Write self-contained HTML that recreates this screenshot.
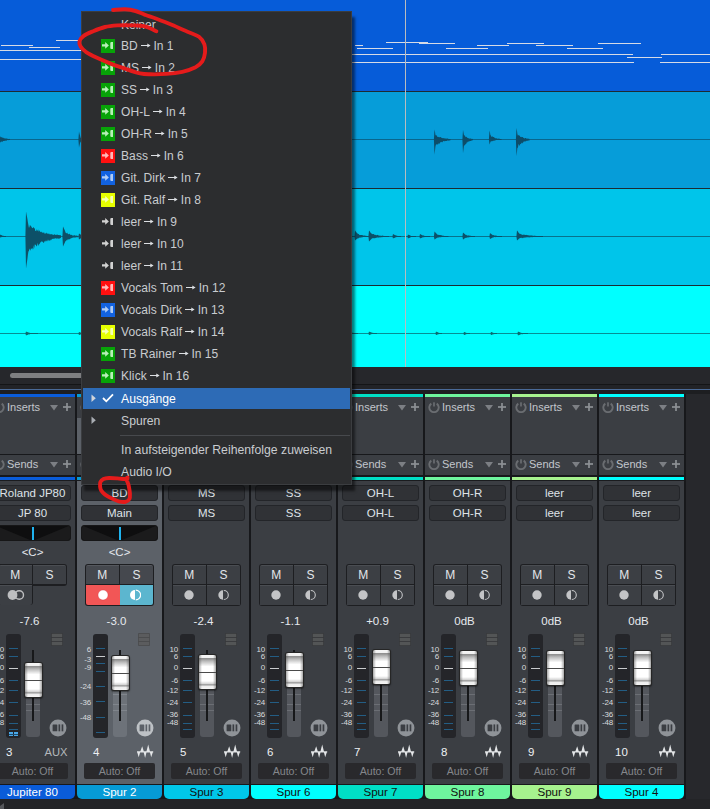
<!DOCTYPE html><html><head><meta charset="utf-8"><style>
*{margin:0;padding:0;box-sizing:border-box}
html,body{width:710px;height:809px;overflow:hidden;background:#232427;font-family:"Liberation Sans", sans-serif;position:relative}
div,svg{position:absolute}
.t{white-space:nowrap;line-height:1}
</style></head><body>
<div style="left:0px;top:0px;width:710px;height:91px;background:#065cd9"></div>
<div style="left:0px;top:92px;width:710px;height:96px;background:#069dd9"></div>
<div style="left:0px;top:189px;width:710px;height:96px;background:#00c5ea"></div>
<div style="left:0px;top:286px;width:710px;height:81px;background:#00ffff"></div>
<div style="left:0px;top:91px;width:710px;height:1px;background:#1d2b33"></div>
<div style="left:0px;top:188px;width:710px;height:1px;background:#1d2b33"></div>
<div style="left:0px;top:285px;width:710px;height:1px;background:#1d2b33"></div>
<div style="left:56px;top:40px;width:104px;height:1px;background:#d6dbe6"></div>
<div style="left:1px;top:45px;width:32px;height:1px;background:#d6dbe6"></div>
<div style="left:29px;top:47px;width:31px;height:1px;background:#d6dbe6"></div>
<div style="left:0px;top:50px;width:82px;height:1px;background:#d6dbe6"></div>
<div style="left:0px;top:59px;width:82px;height:1px;background:#d6dbe6"></div>
<div style="left:386px;top:42px;width:42px;height:1px;background:#d6dbe6"></div>
<div style="left:419px;top:43px;width:36px;height:1px;background:#d6dbe6"></div>
<div style="left:355px;top:45px;width:8px;height:1px;background:#d6dbe6"></div>
<div style="left:477px;top:45px;width:32px;height:1px;background:#d6dbe6"></div>
<div style="left:357px;top:48px;width:36px;height:1px;background:#d6dbe6"></div>
<div style="left:446px;top:48px;width:42px;height:1px;background:#d6dbe6"></div>
<div style="left:507px;top:43px;width:37px;height:1px;background:#d6dbe6"></div>
<div style="left:598px;top:43px;width:43px;height:1px;background:#d6dbe6"></div>
<div style="left:536px;top:45px;width:37px;height:1px;background:#d6dbe6"></div>
<div style="left:567px;top:48px;width:36px;height:1px;background:#d6dbe6"></div>
<div style="left:352px;top:54px;width:281px;height:1px;background:#d6dbe6"></div>
<div style="left:661px;top:54px;width:49px;height:1px;background:#d6dbe6"></div>
<div style="left:627px;top:57px;width:35px;height:1px;background:#d6dbe6"></div>
<div style="left:352px;top:62px;width:282px;height:1px;background:#d6dbe6"></div>
<div style="left:660px;top:62px;width:50px;height:1px;background:#d6dbe6"></div>
<svg style="left:0;top:0" width="710" height="367" viewBox="0 0 710 367"><rect x="0" y="139" width="710" height="1" fill="#0c4f6c" fill-opacity="0.7"/><rect x="0" y="236" width="710" height="1" fill="#0c4f64" fill-opacity="0.7"/><rect x="0" y="333" width="710" height="1" fill="#0a6a70" fill-opacity="0.75"/><path d="M433.9,139.5 L434.5,129.5 L435.0,132.1 L435.4,134.7 L435.9,135.6 L436.4,135.3 L436.9,135.8 L437.3,136.8 L437.8,137.0 L438.3,137.2 L438.7,136.8 L439.2,137.4 L439.7,136.9 L440.1,137.2 L440.6,136.9 L441.1,137.2 L441.6,138.0 L442.0,138.0 L442.5,138.2 L443.0,137.9 L443.4,138.1 L443.9,138.5 L444.4,138.2 L444.9,138.5 L445.3,138.5 L445.8,138.4 L446.3,138.7 L446.7,138.6 L447.2,138.6 L447.7,138.6 L448.1,138.8 L448.6,139.0 L449.1,139.0 L449.6,138.9 L450.0,138.9 L450.5,139.0 L450.5,140.3 L450.0,140.2 L449.6,140.4 L449.1,140.5 L448.6,140.5 L448.1,140.7 L447.7,140.4 L447.2,140.6 L446.7,141.0 L446.3,140.9 L445.8,141.1 L445.3,140.9 L444.9,141.3 L444.4,141.2 L443.9,141.1 L443.4,141.1 L443.0,141.6 L442.5,142.0 L442.0,142.5 L441.6,141.7 L441.1,142.1 L440.6,141.9 L440.1,142.7 L439.7,143.9 L439.2,142.9 L438.7,144.4 L438.3,143.1 L437.8,144.1 L437.3,144.7 L436.9,144.6 L436.4,144.2 L435.9,144.7 L435.4,146.7 L435.0,150.6 L434.5,154.5 Z" fill="#0d4d69"/><path d="M462.4,139.5 L463.0,130.0 L463.5,132.4 L463.9,134.8 L464.4,135.4 L464.8,135.4 L465.3,136.4 L465.7,137.3 L466.2,136.8 L466.6,136.9 L467.1,137.6 L467.5,138.1 L468.0,138.1 L468.5,138.3 L468.9,138.4 L469.4,138.4 L469.8,138.7 L470.3,138.5 L470.7,138.5 L471.2,138.8 L471.6,138.9 L472.1,138.7 L472.5,139.0 L473.0,139.0 L473.0,140.2 L472.5,140.2 L472.1,140.2 L471.6,140.7 L471.2,140.6 L470.7,140.9 L470.3,141.1 L469.8,141.0 L469.4,141.5 L468.9,141.1 L468.5,141.9 L468.0,141.4 L467.5,142.1 L467.1,142.7 L466.6,142.4 L466.2,144.0 L465.7,143.9 L465.3,144.4 L464.8,145.6 L464.4,144.9 L463.9,146.2 L463.5,149.6 L463.0,153.0 Z" fill="#0d4d69"/><path d="M488.9,139.5 L489.5,130.5 L490.0,132.8 L490.4,135.1 L490.9,135.6 L491.3,136.9 L491.8,136.6 L492.3,136.0 L492.7,136.9 L493.2,136.9 L493.7,136.9 L494.1,137.2 L494.6,137.8 L495.0,138.2 L495.5,138.3 L496.0,138.3 L496.4,138.3 L496.9,138.6 L497.3,138.7 L497.8,138.8 L498.3,138.6 L498.7,138.8 L499.2,138.8 L499.7,138.7 L500.1,138.9 L500.6,139.0 L501.0,139.0 L501.5,139.0 L501.5,140.0 L501.0,140.0 L500.6,140.0 L500.1,140.0 L499.7,140.0 L499.2,140.0 L498.7,140.0 L498.3,140.0 L497.8,140.1 L497.3,140.0 L496.9,140.0 L496.4,140.0 L496.0,140.1 L495.5,140.2 L495.0,140.5 L494.6,140.5 L494.1,140.8 L493.7,140.9 L493.2,140.5 L492.7,141.0 L492.3,141.2 L491.8,141.3 L491.3,141.3 L490.9,141.3 L490.4,142.0 L490.0,143.2 L489.5,144.5 Z" fill="#0d4d69"/><path d="M515.9,139.5 L516.5,128.0 L517.0,130.9 L517.4,133.9 L517.9,135.8 L518.4,135.0 L518.8,135.3 L519.3,135.7 L519.8,135.5 L520.2,136.7 L520.7,137.1 L521.1,136.8 L521.6,137.3 L522.1,136.9 L522.5,137.1 L523.0,137.3 L523.5,138.0 L523.9,138.0 L524.4,138.4 L524.9,138.3 L525.3,138.0 L525.8,138.1 L526.2,138.2 L526.7,138.7 L527.2,138.8 L527.6,138.6 L528.1,138.6 L528.6,138.8 L529.0,139.0 L529.5,138.8 L529.5,140.4 L529.0,140.5 L528.6,140.6 L528.1,140.6 L527.6,140.9 L527.2,140.6 L526.7,140.7 L526.2,140.9 L525.8,141.5 L525.3,141.2 L524.9,141.6 L524.4,141.4 L523.9,141.2 L523.5,142.0 L523.0,142.5 L522.5,142.9 L522.1,143.5 L521.6,142.5 L521.1,143.8 L520.7,144.2 L520.2,143.7 L519.8,144.9 L519.3,146.1 L518.8,144.0 L518.4,144.7 L517.9,148.0 L517.4,147.6 L517.0,151.8 L516.5,156.0 Z" fill="#0d4d69"/><path d="M78.4,139.5 L79.0,131.5 L79.4,133.2 L79.8,134.8 L80.1,135.8 L80.5,137.5 L80.9,137.9 L81.2,137.9 L81.6,138.6 L82.0,138.7 L82.0,140.1 L81.6,140.7 L81.2,140.8 L80.9,141.6 L80.5,142.3 L80.1,142.7 L79.8,144.2 L79.4,145.8 L79.0,147.5 Z" fill="#0d4d69"/><path d="M-4.6,139.5 L-4.0,131.5 L-3.5,132.3 L-3.1,133.1 L-2.6,134.0 L-2.1,134.8 L-1.7,135.6 L-1.2,136.7 L-0.7,135.7 L-0.3,137.1 L0.2,136.2 L0.7,137.2 L1.1,137.6 L1.6,136.9 L2.1,137.5 L2.5,137.7 L3.0,137.6 L3.5,138.1 L3.9,138.3 L4.4,138.3 L4.9,138.5 L5.3,138.5 L5.8,138.4 L6.3,138.6 L6.7,138.6 L7.2,138.7 L7.7,138.8 L8.1,139.0 L8.6,139.0 L9.1,138.8 L9.5,139.0 L10.0,139.0 L10.0,140.1 L9.5,140.1 L9.1,140.1 L8.6,140.1 L8.1,140.3 L7.7,140.1 L7.2,140.1 L6.7,140.4 L6.3,140.7 L5.8,140.8 L5.3,140.6 L4.9,141.0 L4.4,140.8 L3.9,141.0 L3.5,140.9 L3.0,140.9 L2.5,141.7 L2.1,141.9 L1.6,141.8 L1.1,141.2 L0.7,142.1 L0.2,142.4 L-0.3,142.9 L-0.7,143.1 L-1.2,142.3 L-1.7,143.4 L-2.1,144.2 L-2.6,145.0 L-3.1,145.9 L-3.5,146.7 L-4.0,147.5 Z" fill="#0d4d69"/><path d="M25.4,236.5 L26.0,211.5 L26.5,214.2 L27.0,216.8 L27.5,219.5 L27.9,222.2 L28.4,224.9 L28.9,227.7 L29.4,227.3 L29.9,224.9 L30.4,226.3 L30.9,224.9 L31.3,226.7 L31.8,227.5 L32.3,228.0 L32.8,228.2 L33.3,227.6 L33.8,226.9 L34.3,228.7 L34.8,227.9 L35.2,230.7 L35.7,231.1 L36.2,231.3 L36.7,229.1 L37.2,231.3 L37.7,230.0 L38.2,229.5 L38.6,231.6 L39.1,231.3 L39.6,229.9 L40.1,232.3 L40.6,231.5 L41.1,232.4 L41.6,231.4 L42.0,231.9 L42.5,233.2 L43.0,232.0 L43.5,233.3 L44.0,232.0 L44.5,233.5 L45.0,233.7 L45.4,233.4 L45.9,233.2 L46.4,232.6 L46.9,233.8 L47.4,233.3 L47.9,234.1 L48.4,233.3 L48.8,234.3 L49.3,233.6 L49.8,234.4 L50.3,234.5 L50.8,234.1 L51.3,234.0 L51.8,234.5 L52.2,234.2 L52.7,234.8 L53.2,234.9 L53.7,234.7 L54.2,234.3 L54.7,234.6 L55.2,234.8 L55.7,234.9 L56.1,234.6 L56.6,235.1 L57.1,234.5 L57.6,234.7 L58.1,235.0 L58.6,235.1 L59.1,235.0 L59.5,235.2 L60.0,235.0 L60.5,235.3 L61.0,235.5 L61.0,237.8 L60.5,238.0 L60.0,238.3 L59.5,238.5 L59.1,238.7 L58.6,238.4 L58.1,238.7 L57.6,238.4 L57.1,238.2 L56.6,238.6 L56.1,238.8 L55.7,238.2 L55.2,238.3 L54.7,238.5 L54.2,238.7 L53.7,238.8 L53.2,238.8 L52.7,238.8 L52.2,239.0 L51.8,238.9 L51.3,240.2 L50.8,239.4 L50.3,240.4 L49.8,240.5 L49.3,240.5 L48.8,240.9 L48.4,240.1 L47.9,239.5 L47.4,240.9 L46.9,241.5 L46.4,240.2 L45.9,241.8 L45.4,240.2 L45.0,241.9 L44.5,240.8 L44.0,242.7 L43.5,242.9 L43.0,241.9 L42.5,241.6 L42.0,242.1 L41.6,241.0 L41.1,242.1 L40.6,242.3 L40.1,242.8 L39.6,244.4 L39.1,243.4 L38.6,245.4 L38.2,245.7 L37.7,242.8 L37.2,245.3 L36.7,246.4 L36.2,245.7 L35.7,244.2 L35.2,245.3 L34.8,244.2 L34.3,248.4 L33.8,245.3 L33.3,248.9 L32.8,249.6 L32.3,247.8 L31.8,249.1 L31.3,248.4 L30.9,248.4 L30.4,250.8 L29.9,249.7 L29.4,248.5 L28.9,250.9 L28.4,251.4 L27.9,254.8 L27.5,258.2 L27.0,261.7 L26.5,265.1 L26.0,268.5 Z" fill="#0d5068"/><path d="M62.4,236.5 L63.0,226.5 L63.5,227.5 L63.9,228.6 L64.4,229.6 L64.9,230.6 L65.3,231.7 L65.8,233.1 L66.3,233.0 L66.8,233.6 L67.2,232.4 L67.7,233.7 L68.2,233.9 L68.6,234.2 L69.1,234.3 L69.6,233.6 L70.0,234.6 L70.5,234.7 L71.0,235.1 L71.4,234.8 L71.9,235.1 L72.4,235.4 L72.8,235.4 L73.3,235.5 L73.8,235.4 L74.2,235.3 L74.7,235.3 L75.2,235.4 L75.7,235.7 L76.1,235.5 L76.6,235.6 L77.1,235.9 L77.5,235.7 L78.0,235.8 L78.0,237.2 L77.5,237.2 L77.1,237.3 L76.6,237.3 L76.1,237.2 L75.7,237.3 L75.2,237.7 L74.7,237.6 L74.2,237.6 L73.8,237.5 L73.3,237.5 L72.8,237.8 L72.4,237.8 L71.9,238.1 L71.4,238.3 L71.0,238.3 L70.5,238.4 L70.0,239.2 L69.6,238.9 L69.1,239.6 L68.6,239.2 L68.2,239.4 L67.7,239.3 L67.2,240.2 L66.8,240.8 L66.3,239.8 L65.8,241.3 L65.3,241.3 L64.9,242.4 L64.4,243.4 L63.9,244.4 L63.5,245.5 L63.0,246.5 Z" fill="#0d5068"/><path d="M78.4,236.5 L79.0,233.5 L79.4,233.7 L79.8,234.0 L80.1,234.2 L80.5,234.5 L80.9,234.7 L81.2,235.0 L81.6,235.5 L82.0,235.6 L82.0,237.6 L81.6,237.7 L81.2,238.0 L80.9,238.3 L80.5,238.5 L80.1,238.8 L79.8,239.0 L79.4,239.3 L79.0,239.5 Z" fill="#0d5068"/><path d="M354.4,236.5 L355.0,230.5 L355.5,231.1 L355.9,231.7 L356.4,232.3 L356.9,233.0 L357.3,233.6 L357.8,233.5 L358.3,234.0 L358.7,234.1 L359.2,234.8 L359.7,235.0 L360.1,235.1 L360.6,234.9 L361.1,234.9 L361.5,235.1 L362.0,235.1 L362.5,235.3 L362.9,235.3 L363.4,235.4 L363.9,235.8 L364.3,235.6 L364.8,235.6 L365.3,235.8 L365.7,235.8 L366.2,235.8 L366.7,235.9 L367.1,236.0 L367.6,236.0 L368.1,236.0 L368.5,236.0 L369.0,236.0 L369.0,237.0 L368.5,237.0 L368.1,237.0 L367.6,237.0 L367.1,237.0 L366.7,237.0 L366.2,237.0 L365.7,237.0 L365.3,237.0 L364.8,237.1 L364.3,237.0 L363.9,237.0 L363.4,237.1 L362.9,237.1 L362.5,237.3 L362.0,237.4 L361.5,237.2 L361.1,237.6 L360.6,237.6 L360.1,237.8 L359.7,237.7 L359.2,237.5 L358.7,238.1 L358.3,238.4 L357.8,238.5 L357.3,238.4 L356.9,238.9 L356.4,239.3 L355.9,239.7 L355.5,240.1 L355.0,240.5 Z" fill="#0d5068"/><path d="M368.4,236.5 L369.0,230.5 L369.5,231.1 L370.0,231.8 L370.4,232.4 L370.9,233.0 L371.4,233.6 L371.9,233.7 L372.3,234.0 L372.8,234.2 L373.3,233.9 L373.8,233.9 L374.2,235.0 L374.7,234.4 L375.2,234.8 L375.7,235.1 L376.1,235.2 L376.6,235.3 L377.1,234.8 L377.6,235.0 L378.0,235.0 L378.5,235.5 L379.0,235.4 L379.5,235.7 L380.0,235.5 L380.4,235.7 L380.9,235.7 L381.4,235.9 L381.9,235.6 L382.3,235.6 L382.8,235.7 L383.3,235.9 L383.8,235.7 L384.2,235.9 L384.7,236.0 L385.2,236.0 L385.7,236.0 L386.1,236.0 L386.6,236.0 L387.1,236.0 L387.6,236.0 L388.0,236.0 L388.5,236.0 L389.0,236.0 L389.0,237.0 L388.5,237.0 L388.0,237.0 L387.6,237.0 L387.1,237.0 L386.6,237.0 L386.1,237.0 L385.7,237.0 L385.2,237.0 L384.7,237.0 L384.2,237.0 L383.8,237.0 L383.3,237.0 L382.8,237.0 L382.3,237.2 L381.9,237.0 L381.4,237.3 L380.9,237.4 L380.4,237.2 L380.0,237.2 L379.5,237.4 L379.0,237.2 L378.5,237.7 L378.0,237.6 L377.6,237.6 L377.1,237.4 L376.6,237.7 L376.1,237.8 L375.7,238.2 L375.2,237.8 L374.7,238.4 L374.2,238.1 L373.8,238.6 L373.3,238.0 L372.8,238.1 L372.3,238.5 L371.9,238.4 L371.4,238.9 L370.9,239.4 L370.4,239.9 L370.0,240.5 L369.5,241.0 L369.0,241.5 Z" fill="#0d5068"/><path d="M392.4,236.5 L393.0,234.0 L393.4,234.2 L393.9,234.5 L394.3,234.7 L394.8,235.0 L395.2,235.2 L395.7,235.3 L396.1,235.4 L396.6,235.8 L397.0,235.6 L397.4,235.9 L397.9,236.0 L398.3,235.9 L398.8,236.0 L399.2,236.0 L399.7,236.0 L400.1,236.0 L400.6,236.0 L401.0,236.0 L401.0,237.0 L400.6,237.0 L400.1,237.0 L399.7,237.0 L399.2,237.0 L398.8,237.0 L398.3,237.0 L397.9,237.0 L397.4,237.0 L397.0,237.0 L396.6,237.0 L396.1,237.3 L395.7,237.3 L395.2,237.5 L394.8,237.7 L394.3,237.9 L393.9,238.1 L393.4,238.3 L393.0,238.5 Z" fill="#0d5068"/><path d="M407.4,236.5 L408.0,234.5 L408.4,234.7 L408.9,234.9 L409.3,235.1 L409.8,235.3 L410.2,235.5 L410.7,235.7 L411.1,235.9 L411.6,235.9 L412.0,236.0 L412.4,236.0 L412.9,236.0 L413.3,236.0 L413.8,236.0 L414.2,236.0 L414.7,236.0 L415.1,236.0 L415.6,236.0 L416.0,236.0 L416.0,237.0 L415.6,237.0 L415.1,237.0 L414.7,237.0 L414.2,237.0 L413.8,237.0 L413.3,237.0 L412.9,237.0 L412.4,237.1 L412.0,237.0 L411.6,237.0 L411.1,237.1 L410.7,237.2 L410.2,237.5 L409.8,237.7 L409.3,237.9 L408.9,238.1 L408.4,238.3 L408.0,238.5 Z" fill="#0d5068"/><path d="M419.4,236.5 L420.0,234.0 L420.5,234.2 L420.9,234.5 L421.4,234.8 L421.8,235.0 L422.3,235.2 L422.7,235.5 L423.2,235.3 L423.6,235.5 L424.1,235.9 L424.5,235.7 L425.0,235.9 L425.5,236.0 L425.9,235.9 L426.4,235.9 L426.8,236.0 L427.3,236.0 L427.7,236.0 L428.2,236.0 L428.6,236.0 L429.1,236.0 L429.5,236.0 L430.0,236.0 L430.0,237.0 L429.5,237.0 L429.1,237.0 L428.6,237.0 L428.2,237.0 L427.7,237.0 L427.3,237.0 L426.8,237.0 L426.4,237.0 L425.9,237.0 L425.5,237.0 L425.0,237.0 L424.5,237.0 L424.1,237.2 L423.6,237.0 L423.2,237.4 L422.7,237.3 L422.3,237.5 L421.8,237.7 L421.4,237.9 L420.9,238.1 L420.5,238.3 L420.0,238.5 Z" fill="#0d5068"/><path d="M433.9,236.5 L434.5,231.5 L435.0,232.0 L435.4,232.5 L435.9,233.0 L436.4,233.6 L436.8,234.1 L437.3,234.8 L437.8,234.4 L438.2,235.0 L438.7,234.8 L439.2,235.0 L439.6,235.0 L440.1,235.3 L440.6,235.0 L441.0,235.1 L441.5,235.6 L442.0,235.3 L442.4,235.7 L442.9,235.7 L443.4,235.8 L443.8,235.7 L444.3,235.9 L444.8,235.9 L445.2,235.9 L445.7,235.9 L446.2,236.0 L446.6,236.0 L447.1,236.0 L447.6,236.0 L448.0,236.0 L448.5,236.0 L448.5,237.0 L448.0,237.0 L447.6,237.0 L447.1,237.0 L446.6,237.0 L446.2,237.0 L445.7,237.0 L445.2,237.0 L444.8,237.0 L444.3,237.0 L443.8,237.0 L443.4,237.0 L442.9,237.0 L442.4,237.0 L442.0,237.1 L441.5,237.0 L441.0,237.2 L440.6,237.3 L440.1,237.3 L439.6,237.2 L439.2,237.3 L438.7,237.6 L438.2,237.4 L437.8,237.8 L437.3,237.6 L436.8,238.0 L436.4,238.3 L435.9,238.6 L435.4,238.9 L435.0,239.2 L434.5,239.5 Z" fill="#0d5068"/><path d="M462.4,236.5 L463.0,232.5 L463.5,232.9 L463.9,233.3 L464.4,233.7 L464.8,234.1 L465.3,234.5 L465.8,235.0 L466.2,234.8 L466.7,235.3 L467.2,235.4 L467.6,235.5 L468.1,235.7 L468.5,235.3 L469.0,235.5 L469.5,235.5 L469.9,235.9 L470.4,235.7 L470.8,235.8 L471.3,236.0 L471.8,236.0 L472.2,236.0 L472.7,236.0 L473.2,236.0 L473.6,236.0 L474.1,236.0 L474.5,236.0 L475.0,236.0 L475.0,237.0 L474.5,237.0 L474.1,237.0 L473.6,237.0 L473.2,237.0 L472.7,237.0 L472.2,237.0 L471.8,237.0 L471.3,237.0 L470.8,237.0 L470.4,237.0 L469.9,237.2 L469.5,237.1 L469.0,237.3 L468.5,237.4 L468.1,237.3 L467.6,237.2 L467.2,237.7 L466.7,237.5 L466.2,237.9 L465.8,237.7 L465.3,238.0 L464.8,238.3 L464.4,238.6 L463.9,238.9 L463.5,239.2 L463.0,239.5 Z" fill="#0d5068"/><path d="M489.4,236.5 L490.0,233.0 L490.5,233.4 L490.9,233.7 L491.4,234.1 L491.8,234.4 L492.3,234.8 L492.8,235.2 L493.2,234.9 L493.7,235.3 L494.2,235.2 L494.6,235.7 L495.1,235.4 L495.5,235.5 L496.0,235.8 L496.5,235.6 L496.9,235.9 L497.4,236.0 L497.8,236.0 L498.3,235.9 L498.8,235.9 L499.2,236.0 L499.7,236.0 L500.2,236.0 L500.6,236.0 L501.1,236.0 L501.5,236.0 L502.0,236.0 L502.0,237.0 L501.5,237.0 L501.1,237.0 L500.6,237.0 L500.2,237.0 L499.7,237.0 L499.2,237.0 L498.8,237.0 L498.3,237.0 L497.8,237.0 L497.4,237.0 L496.9,237.0 L496.5,237.0 L496.0,237.0 L495.5,237.2 L495.1,237.1 L494.6,237.1 L494.2,237.1 L493.7,237.5 L493.2,237.2 L492.8,237.5 L492.3,237.7 L491.8,238.0 L491.4,238.2 L490.9,238.5 L490.5,238.7 L490.0,239.0 Z" fill="#0d5068"/><path d="M516.4,236.5 L517.0,230.5 L517.5,231.1 L518.0,231.8 L518.4,232.4 L518.9,233.0 L519.4,233.7 L519.9,233.8 L520.4,234.2 L520.9,233.8 L521.3,234.6 L521.8,234.6 L522.3,234.9 L522.8,234.7 L523.3,234.2 L523.7,234.9 L524.2,235.1 L524.7,234.6 L525.2,235.1 L525.7,234.9 L526.1,234.8 L526.6,235.0 L527.1,234.9 L527.6,235.2 L528.1,235.1 L528.6,235.5 L529.0,235.6 L529.5,235.4 L530.0,235.5 L530.5,235.5 L531.0,235.4 L531.4,235.4 L531.9,235.6 L532.4,235.5 L532.9,235.9 L533.4,235.9 L533.9,235.6 L534.3,235.7 L534.8,235.7 L535.3,235.9 L535.8,235.8 L536.3,235.9 L536.7,236.0 L537.2,236.0 L537.7,236.0 L538.2,236.0 L538.7,236.0 L539.1,236.0 L539.6,236.0 L540.1,236.0 L540.6,236.0 L541.1,236.0 L541.6,236.0 L542.0,236.0 L542.5,236.0 L543.0,236.0 L543.0,237.0 L542.5,237.0 L542.0,237.0 L541.6,237.0 L541.1,237.0 L540.6,237.0 L540.1,237.0 L539.6,237.0 L539.1,237.0 L538.7,237.0 L538.2,237.0 L537.7,237.0 L537.2,237.0 L536.7,237.0 L536.3,237.0 L535.8,237.0 L535.3,237.0 L534.8,237.0 L534.3,237.0 L533.9,237.0 L533.4,237.0 L532.9,237.0 L532.4,237.2 L531.9,237.2 L531.4,237.0 L531.0,237.2 L530.5,237.1 L530.0,237.4 L529.5,237.2 L529.0,237.4 L528.6,237.2 L528.1,237.2 L527.6,237.3 L527.1,237.3 L526.6,237.3 L526.1,237.6 L525.7,237.6 L525.2,237.5 L524.7,237.6 L524.2,237.7 L523.7,237.5 L523.3,238.1 L522.8,238.2 L522.3,237.9 L521.8,237.6 L521.3,238.2 L520.9,237.8 L520.4,238.0 L519.9,238.1 L519.4,238.4 L518.9,238.8 L518.4,239.2 L518.0,239.7 L517.5,240.1 L517.0,240.5 Z" fill="#0d5068"/><path d="M-0.6,236.5 L0.0,234.5 L0.4,234.7 L0.9,234.9 L1.3,235.1 L1.7,235.3 L2.1,235.4 L2.6,235.7 L3.0,235.8 L3.4,235.8 L3.9,236.0 L4.3,236.0 L4.7,236.0 L5.1,236.0 L5.6,236.0 L6.0,236.0 L6.0,237.0 L5.6,237.0 L5.1,237.0 L4.7,237.0 L4.3,237.0 L3.9,237.0 L3.4,237.0 L3.0,237.0 L2.6,237.0 L2.1,237.0 L1.7,237.1 L1.3,237.2 L0.9,237.3 L0.4,237.4 L0.0,237.5 Z" fill="#0d5068"/><path d="M349.4,333.5 L350.0,331.5 L350.4,331.7 L350.9,331.9 L351.3,332.1 L351.8,332.3 L352.2,332.5 L352.7,332.9 L353.1,332.7 L353.6,333.0 L354.0,333.0 L354.4,333.0 L354.9,333.0 L355.3,333.0 L355.8,333.0 L356.2,333.0 L356.7,333.0 L357.1,333.0 L357.6,333.0 L358.0,333.0 L358.0,334.0 L357.6,334.0 L357.1,334.0 L356.7,334.0 L356.2,334.0 L355.8,334.0 L355.3,334.0 L354.9,334.0 L354.4,334.0 L354.0,334.0 L353.6,334.0 L353.1,334.0 L352.7,334.0 L352.2,334.0 L351.8,334.0 L351.3,334.0 L350.9,334.0 L350.4,334.0 L350.0,334.0 Z" fill="#0a6a70"/><path d="M368.4,333.5 L369.0,331.5 L369.4,331.7 L369.9,331.9 L370.3,332.1 L370.8,332.3 L371.2,332.5 L371.7,332.5 L372.1,332.6 L372.6,332.9 L373.0,332.8 L373.4,333.0 L373.9,333.0 L374.3,333.0 L374.8,333.0 L375.2,333.0 L375.7,333.0 L376.1,333.0 L376.6,333.0 L377.0,333.0 L377.0,334.0 L376.6,334.0 L376.1,334.0 L375.7,334.0 L375.2,334.0 L374.8,334.0 L374.3,334.0 L373.9,334.0 L373.4,334.0 L373.0,334.0 L372.6,334.1 L372.1,334.0 L371.7,334.0 L371.2,334.3 L370.8,334.4 L370.3,334.6 L369.9,334.7 L369.4,334.9 L369.0,335.0 Z" fill="#0a6a70"/><path d="M435.4,333.5 L436.0,331.5 L436.4,331.7 L436.9,331.9 L437.3,332.1 L437.7,332.3 L438.1,332.4 L438.6,332.7 L439.0,332.8 L439.4,332.9 L439.9,333.0 L440.3,333.0 L440.7,333.0 L441.1,333.0 L441.6,333.0 L442.0,333.0 L442.0,334.0 L441.6,334.0 L441.1,334.0 L440.7,334.0 L440.3,334.0 L439.9,334.0 L439.4,334.0 L439.0,334.1 L438.6,334.2 L438.1,334.3 L437.7,334.4 L437.3,334.6 L436.9,334.7 L436.4,334.9 L436.0,335.0 Z" fill="#0a6a70"/><path d="M463.4,333.5 L464.0,332.0 L464.4,332.1 L464.9,332.3 L465.3,332.4 L465.7,332.6 L466.1,332.7 L466.6,333.0 L467.0,332.9 L467.4,333.0 L467.9,333.0 L468.3,333.0 L468.7,333.0 L469.1,333.0 L469.6,333.0 L470.0,333.0 L470.0,334.0 L469.6,334.0 L469.1,334.0 L468.7,334.0 L468.3,334.0 L467.9,334.0 L467.4,334.0 L467.0,334.0 L466.6,334.1 L466.1,334.3 L465.7,334.4 L465.3,334.6 L464.9,334.7 L464.4,334.9 L464.0,335.0 Z" fill="#0a6a70"/><path d="M490.4,333.5 L491.0,332.0 L491.4,332.1 L491.9,332.3 L492.3,332.4 L492.7,332.6 L493.1,332.7 L493.6,332.9 L494.0,332.9 L494.4,332.9 L494.9,333.0 L495.3,333.0 L495.7,333.0 L496.1,333.0 L496.6,333.0 L497.0,333.0 L497.0,334.0 L496.6,334.0 L496.1,334.0 L495.7,334.0 L495.3,334.0 L494.9,334.0 L494.4,334.0 L494.0,334.2 L493.6,334.3 L493.1,334.3 L492.7,334.4 L492.3,334.6 L491.9,334.7 L491.4,334.9 L491.0,335.0 Z" fill="#0a6a70"/><path d="M517.4,333.5 L518.0,331.5 L518.5,331.7 L518.9,331.9 L519.4,332.1 L519.8,332.3 L520.3,332.5 L520.7,332.8 L521.2,332.7 L521.6,333.0 L522.1,333.0 L522.5,332.9 L523.0,333.0 L523.5,333.0 L523.9,333.0 L524.4,333.0 L524.8,333.0 L525.3,333.0 L525.7,333.0 L526.2,333.0 L526.6,333.0 L527.1,333.0 L527.5,333.0 L528.0,333.0 L528.0,334.0 L527.5,334.0 L527.1,334.0 L526.6,334.0 L526.2,334.0 L525.7,334.0 L525.3,334.0 L524.8,334.0 L524.4,334.0 L523.9,334.0 L523.5,334.0 L523.0,334.1 L522.5,334.2 L522.1,334.3 L521.6,334.1 L521.2,334.2 L520.7,334.3 L520.3,334.5 L519.8,334.7 L519.4,334.9 L518.9,335.1 L518.5,335.3 L518.0,335.5 Z" fill="#0a6a70"/><path d="M25.4,333.5 L26.0,331.5 L26.5,331.7 L26.9,331.9 L27.4,332.1 L27.8,332.3 L28.3,332.5 L28.8,332.5 L29.2,332.7 L29.7,332.8 L30.2,332.9 L30.6,333.0 L31.1,332.9 L31.5,333.0 L32.0,333.0 L32.5,333.0 L32.9,333.0 L33.4,333.0 L33.8,333.0 L34.3,333.0 L34.8,333.0 L35.2,333.0 L35.7,333.0 L36.2,333.0 L36.6,333.0 L37.1,333.0 L37.5,333.0 L38.0,333.0 L38.0,334.0 L37.5,334.0 L37.1,334.0 L36.6,334.0 L36.2,334.0 L35.7,334.0 L35.2,334.0 L34.8,334.0 L34.3,334.0 L33.8,334.0 L33.4,334.0 L32.9,334.0 L32.5,334.0 L32.0,334.0 L31.5,334.1 L31.1,334.0 L30.6,334.0 L30.2,334.0 L29.7,334.3 L29.2,334.5 L28.8,334.2 L28.3,334.5 L27.8,334.7 L27.4,334.9 L26.9,335.1 L26.5,335.3 L26.0,335.5 Z" fill="#0a6a70"/><path d="M78.4,333.5 L79.0,332.0 L79.3,332.1 L79.7,332.2 L80.0,332.3 L80.3,332.4 L80.7,332.6 L81.0,332.7 L81.0,334.3 L80.7,334.4 L80.3,334.6 L80.0,334.7 L79.7,334.8 L79.3,334.9 L79.0,335.0 Z" fill="#0a6a70"/></svg>
<div style="left:405px;top:0px;width:1px;height:367px;background:#b9bcbf"></div>
<div style="left:0px;top:367px;width:710px;height:17px;background:#26272b"></div>
<div style="left:10px;top:373px;width:150px;height:5px;background:#7e7f81;border-radius:3px"></div>
<div style="left:0px;top:384px;width:710px;height:1px;background:#141517"></div>
<div style="left:0px;top:385px;width:710px;height:4px;background:#222327"></div>
<div style="left:0px;top:389px;width:710px;height:1px;background:#4a6a98"></div>
<div style="left:0px;top:390px;width:710px;height:4px;background:#1d1e21"></div>
<div style="left:0px;top:394px;width:710px;height:415px;background:#17181b"></div>
<div style="left:684px;top:394px;width:26px;height:415px;background:#27282c"></div>
<div style="left:684px;top:394px;width:2px;height:415px;background:#17181b"></div>
<div style="left:0px;top:799px;width:710px;height:10px;background:#232427"></div>
<div style="left:-10px;top:394px;width:85px;height:3px;background:#0a5cd9"></div>
<div style="left:-10px;top:477px;width:85px;height:3px;background:#0a5cd9"></div>
<div style="left:-10px;top:480px;width:85px;height:1px;background:#1a1b1e"></div>
<div style="left:-10px;top:397px;width:85px;height:57px;background:#3b3e43"></div>
<div style="left:-10px;top:397px;width:85px;height:21px;background:#3b3e43"></div>
<div style="left:-10px;top:455px;width:85px;height:20px;background:#3b3e43"></div>
<svg width="12" height="12" viewBox="0 0 12 12" style="left:-7.1px;top:400.9px"><path d="M3.3,2.6 A4.7,4.7 0 1 0 8.7,2.6" fill="none" stroke="#6a6d71" stroke-width="1.9"/><rect x="5.15" y="1.2" width="1.7" height="4.4" rx="0.5" fill="#6a6d71"/></svg>
<div class="t" style="left:7px;top:402px;font-size:11px;color:#c3c6cc;">Inserts</div>
<svg width="8" height="6" viewBox="0 0 8 6" style="left:50px;top:405px"><path d="M0,0 H8 L4,5.5 Z" fill="#7c7f84"/></svg>
<svg width="8" height="8" viewBox="0 0 8 8" style="left:63px;top:403.3px"><rect x="3.15" y="0" width="1.7" height="8" fill="#8d9095"/><rect x="0" y="3.15" width="8" height="1.7" fill="#8d9095"/></svg>
<svg width="12" height="12" viewBox="0 0 12 12" style="left:-7.1px;top:458.0px"><path d="M3.3,2.6 A4.7,4.7 0 1 0 8.7,2.6" fill="none" stroke="#6a6d71" stroke-width="1.9"/><rect x="5.15" y="1.2" width="1.7" height="4.4" rx="0.5" fill="#6a6d71"/></svg>
<div class="t" style="left:7px;top:459px;font-size:11px;color:#c3c6cc;">Sends</div>
<svg width="8" height="6" viewBox="0 0 8 6" style="left:50px;top:462px"><path d="M0,0 H8 L4,5.5 Z" fill="#7c7f84"/></svg>
<svg width="8" height="8" viewBox="0 0 8 8" style="left:63px;top:460.3px"><rect x="3.15" y="0" width="1.7" height="8" fill="#8d9095"/><rect x="0" y="3.15" width="8" height="1.7" fill="#8d9095"/></svg>
<div style="left:-10px;top:481px;width:85px;height:303px;background:#3b3e43"></div>
<div style="left:-6px;top:485.2px;width:77px;height:15.8px;background:#303236;border:1px solid #232529;border-radius:3px"></div>
<div class="t" style="left:-6px;top:487.9px;font-size:11.5px;color:#dfe3e8;width:77px;text-align:center;">Roland JP80</div>
<div style="left:-6px;top:505.2px;width:77px;height:15.8px;background:#303236;border:1px solid #232529;border-radius:3px"></div>
<div class="t" style="left:-6px;top:507.9px;font-size:11.5px;color:#dfe3e8;width:77px;text-align:center;">JP 80</div>
<div style="left:-6px;top:525px;width:77px;height:16px;background:#0e0e0f;border:1px solid #161617;border-radius:3px;overflow:hidden"><svg width="77" height="16" style="left:-1px;top:-1px"><path d="M0,0 L38.5,16 L0,16 Z" fill="#1b1b1c"/><path d="M77,0 L38.5,16 L77,16 Z" fill="#1b1b1c"/></svg></div>
<div style="left:32.2px;top:526.5px;width:1.6px;height:13.5px;background:#1fb2ee"></div>
<div class="t" style="left:-6px;top:547px;font-size:11.5px;color:#e6e9ee;width:77px;text-align:center;">&lt;C&gt;</div>
<div style="left:-1.9000000000000004px;top:564px;width:68.8px;height:22.2px;background:#1d1e21;border-radius:3px 3px 3px 0"></div>
<div style="left:-1.9000000000000004px;top:584px;width:34.5px;height:21.2px;background:#1d1e21;border-radius:0 0 3px 3px"></div>
<div style="left:-0.9000000000000004px;top:565px;width:33px;height:19px;background:#3c3f44;border-top:1px solid #4a4d52;border-radius:2px 0 0 0"></div>
<div style="left:33.1px;top:565px;width:32.8px;height:19px;background:#3c3f44;border-top:1px solid #4a4d52;border-radius:0 2px 0 0"></div>
<div class="t" style="left:-0.9000000000000004px;top:569px;font-size:12px;color:#e3e6ea;width:32.5px;text-align:center;">M</div>
<div class="t" style="left:33.1px;top:569px;font-size:12px;color:#e3e6ea;width:32.8px;text-align:center;">S</div>
<div style="left:-0.9000000000000004px;top:585.2px;width:33px;height:19.4px;background:#3c3f44;border-top:1px solid #4a4d52;border-radius:0 0 2px 2px"></div>
<svg width="22" height="12" style="left:4.6px;top:589.2px"><circle cx="7.5" cy="6" r="4.9" fill="#bdbec0"/><circle cx="14.2" cy="6" r="4.3" fill="none" stroke="#bdbec0" stroke-width="1.4"/></svg>
<div class="t" style="left:-10px;top:616px;font-size:11.5px;color:#e6e9ee;width:79px;text-align:center;">-7.6</div>
<svg width="12" height="13" style="left:50.5px;top:633px"><rect x="0" y="0" width="12" height="13" rx="1.2" fill="#38393b"/><rect x="0.8" y="0.8" width="10.4" height="3.2" fill="#535556"/><rect x="0.8" y="4.9" width="10.4" height="3.2" fill="#535556"/><rect x="0.8" y="9" width="10.4" height="3.2" fill="#535556"/></svg>
<div style="left:6px;top:634px;width:15px;height:103.5px;background:#242529;border-radius:3px"></div>
<div style="left:9px;top:648px;width:9px;height:1px;background:#235d84"></div>
<div style="left:9px;top:656px;width:9px;height:1px;background:#235d84"></div>
<div style="left:9px;top:668px;width:9px;height:1px;background:#c9cbcd"></div>
<div style="left:9px;top:680px;width:9px;height:1px;background:#235d84"></div>
<div style="left:9px;top:690px;width:9px;height:1px;background:#235d84"></div>
<div style="left:9px;top:702px;width:9px;height:1px;background:#235d84"></div>
<div style="left:9px;top:715px;width:9px;height:1px;background:#235d84"></div>
<div style="left:9px;top:723px;width:9px;height:1px;background:#235d84"></div>
<div style="left:9px;top:729px;width:9px;height:1px;background:#235d84"></div>
<div class="t" style="left:-31px;top:645.6px;font-size:8px;color:#d9dbdd;letter-spacing:-0.2px;width:35px;text-align:right;">10</div>
<div class="t" style="left:-31px;top:652.8000000000001px;font-size:8px;color:#d9dbdd;letter-spacing:-0.2px;width:35px;text-align:right;">6</div>
<div class="t" style="left:-31px;top:664.4px;font-size:8px;color:#d9dbdd;letter-spacing:-0.2px;width:35px;text-align:right;">0</div>
<div class="t" style="left:-31px;top:676.5px;font-size:8px;color:#d9dbdd;letter-spacing:-0.2px;width:35px;text-align:right;">-6</div>
<div class="t" style="left:-31px;top:686.5px;font-size:8px;color:#d9dbdd;letter-spacing:-0.2px;width:35px;text-align:right;">-12</div>
<div class="t" style="left:-31px;top:699.4px;font-size:8px;color:#d9dbdd;letter-spacing:-0.2px;width:35px;text-align:right;">-24</div>
<div class="t" style="left:-31px;top:711.4px;font-size:8px;color:#d9dbdd;letter-spacing:-0.2px;width:35px;text-align:right;">-36</div>
<div class="t" style="left:-31px;top:719.1px;font-size:8px;color:#d9dbdd;letter-spacing:-0.2px;width:35px;text-align:right;">-48</div>
<div style="left:9px;top:732px;width:4px;height:4px;background:#4aa8e8;border-top:1.5px solid #4aa8e8;"></div>
<div style="left:14px;top:732px;width:4px;height:4px;background:#4aa8e8"></div>
<div style="left:9px;top:734px;width:9px;height:0.7px;background:#1d4c6e"></div>
<div style="left:26px;top:698px;width:14px;height:39px;background:#54575d;border-radius:0 0 3px 3px"></div>
<div style="left:26px;top:704px;width:14px;height:1px;background:#6b6e74"></div>
<div style="left:26px;top:710px;width:14px;height:1px;background:#6b6e74"></div>
<div style="left:32.2px;top:650px;width:2px;height:71px;background:#17181a"></div>
<div style="left:23.6px;top:661.8px;width:19px;height:36.6px;border-radius:3px;background:#262626;box-shadow:0 1px 1.5px rgba(0,0,0,.45);overflow:hidden"><div style="left:1px;top:1px;width:17px;height:34.6px;border-radius:2px;background:linear-gradient(#f6f6f6 0,#f0f0f0 3px,#7e7e7e 3.6px,#9c9c9c 4.4px,#b8b8b8 6px,#e0e0e0 9px,#ffffff 11.5px,#ffffff 17.3px,#4a4a4a 17.4px,#4a4a4a 18.3px,#ffffff 18.4px,#ffffff 26px,#d8d8d8 28.5px,#8a8a8a 30px,#ececec 30.9px,#f6f6f6 34.6px)"></div><div style="left:1px;top:1px;width:17px;height:34.6px;border-radius:2px;background:linear-gradient(90deg,rgba(80,80,80,.5) 0,rgba(255,255,255,0) 3px,rgba(255,255,255,0) 14px,rgba(80,80,80,.5) 17px)"></div></div>
<svg width="20" height="20" style="left:47.6px;top:717.6px"><circle cx="10" cy="10" r="8.45" fill="#8f9398"/><rect x="4.6" y="6.4" width="4.7" height="6.9" rx="0.6" fill="#3b3e43"/><rect x="10.5" y="6.4" width="1.7" height="6.9" fill="#3b3e43"/><rect x="13.6" y="6.4" width="1.7" height="6.9" fill="#3b3e43"/></svg>
<div class="t" style="left:6px;top:746.6px;font-size:11.5px;color:#eef0f3;">3</div>
<div class="t" style="left:17.6px;top:746.6px;font-size:11.2px;color:#b4b7bb;width:50px;text-align:right;">AUX</div>
<div style="left:-3px;top:763px;width:71px;height:16px;background:#29292c;border-radius:2px"></div>
<div class="t" style="left:-3px;top:766.3px;font-size:10.6px;color:#84878b;width:71px;text-align:center;">Auto: Off</div>
<div style="left:-10px;top:784.5px;width:85px;height:14.5px;background:#0a5cd9;border-radius:0 0 5px 5px"></div>
<div class="t" style="left:-10px;top:786px;font-size:11.6px;color:#ffffff;width:85px;text-align:center;">Jupiter 80</div>
<div style="left:77px;top:394px;width:85px;height:3px;background:#069bd6"></div>
<div style="left:77px;top:477px;width:85px;height:3px;background:#069bd6"></div>
<div style="left:77px;top:480px;width:85px;height:1px;background:#1a1b1e"></div>
<div style="left:77px;top:397px;width:85px;height:57px;background:#5c6168"></div>
<div style="left:77px;top:397px;width:85px;height:21px;background:#3b3e43"></div>
<div style="left:77px;top:455px;width:85px;height:20px;background:#3b3e43"></div>
<svg width="12" height="12" viewBox="0 0 12 12" style="left:79.9px;top:400.9px"><path d="M3.3,2.6 A4.7,4.7 0 1 0 8.7,2.6" fill="none" stroke="#6a6d71" stroke-width="1.9"/><rect x="5.15" y="1.2" width="1.7" height="4.4" rx="0.5" fill="#6a6d71"/></svg>
<div class="t" style="left:94px;top:402px;font-size:11px;color:#c3c6cc;">Inserts</div>
<svg width="8" height="6" viewBox="0 0 8 6" style="left:137px;top:405px"><path d="M0,0 H8 L4,5.5 Z" fill="#7c7f84"/></svg>
<svg width="8" height="8" viewBox="0 0 8 8" style="left:150px;top:403.3px"><rect x="3.15" y="0" width="1.7" height="8" fill="#8d9095"/><rect x="0" y="3.15" width="8" height="1.7" fill="#8d9095"/></svg>
<svg width="12" height="12" viewBox="0 0 12 12" style="left:79.9px;top:458.0px"><path d="M3.3,2.6 A4.7,4.7 0 1 0 8.7,2.6" fill="none" stroke="#6a6d71" stroke-width="1.9"/><rect x="5.15" y="1.2" width="1.7" height="4.4" rx="0.5" fill="#6a6d71"/></svg>
<div class="t" style="left:94px;top:459px;font-size:11px;color:#c3c6cc;">Sends</div>
<svg width="8" height="6" viewBox="0 0 8 6" style="left:137px;top:462px"><path d="M0,0 H8 L4,5.5 Z" fill="#7c7f84"/></svg>
<svg width="8" height="8" viewBox="0 0 8 8" style="left:150px;top:460.3px"><rect x="3.15" y="0" width="1.7" height="8" fill="#8d9095"/><rect x="0" y="3.15" width="8" height="1.7" fill="#8d9095"/></svg>
<div style="left:77px;top:481px;width:85px;height:303px;background:#5c6168"></div>
<div style="left:81px;top:485.2px;width:77px;height:15.8px;background:#303236;border:1px solid #232529;border-radius:3px"></div>
<div class="t" style="left:81px;top:487.9px;font-size:11.5px;color:#dfe3e8;width:77px;text-align:center;">BD</div>
<div style="left:81px;top:505.2px;width:77px;height:15.8px;background:#303236;border:1px solid #232529;border-radius:3px"></div>
<div class="t" style="left:81px;top:507.9px;font-size:11.5px;color:#dfe3e8;width:77px;text-align:center;">Main</div>
<div style="left:81px;top:525px;width:77px;height:16px;background:#0e0e0f;border:1px solid #161617;border-radius:3px;overflow:hidden"><svg width="77" height="16" style="left:-1px;top:-1px"><path d="M0,0 L38.5,16 L0,16 Z" fill="#1b1b1c"/><path d="M77,0 L38.5,16 L77,16 Z" fill="#1b1b1c"/></svg></div>
<div style="left:119.2px;top:526.5px;width:1.6px;height:13.5px;background:#1fb2ee"></div>
<div class="t" style="left:81px;top:547px;font-size:11.5px;color:#e6e9ee;width:77px;text-align:center;">&lt;C&gt;</div>
<div style="left:85.1px;top:564px;width:68.8px;height:41.6px;background:#1d1e21;border-radius:3px"></div>
<div style="left:86.1px;top:565px;width:33px;height:19px;background:#45484e;border-top:1px solid #55585e;border-radius:2px 0 0 0"></div>
<div style="left:120.1px;top:565px;width:32.8px;height:19px;background:#45484e;border-top:1px solid #55585e;border-radius:0 2px 0 0"></div>
<div class="t" style="left:86.1px;top:569px;font-size:12px;color:#e3e6ea;width:32.5px;text-align:center;">M</div>
<div class="t" style="left:120.1px;top:569px;font-size:12px;color:#e3e6ea;width:32.8px;text-align:center;">S</div>
<div style="left:86.1px;top:585.2px;width:33.6px;height:19.4px;background:#f25656;border-radius:0 0 0 2px"></div>
<div style="left:119.69999999999999px;top:585.2px;width:33.2px;height:19.4px;background:#5cb6cf;border-radius:0 0 2px 0"></div>
<svg width="12" height="12" style="left:96.6px;top:589.2px"><circle cx="6" cy="6" r="5" fill="#fff" stroke="#c23" stroke-width="0.3"/></svg>
<svg width="12" height="12" style="left:129.39999999999998px;top:589.2px"><path d="M6,1 A5,5 0 0 0 6,11 Z" fill="#fff"/><path d="M6.8,1.2 A4.8,4.8 0 0 1 6.8,10.8" fill="none" stroke="#fff" stroke-width="1.2"/></svg>
<div class="t" style="left:77px;top:616px;font-size:11.5px;color:#e6e9ee;width:79px;text-align:center;">-3.0</div>
<svg width="12" height="13" style="left:137.5px;top:633px"><rect x="0" y="0" width="12" height="13" rx="1.2" fill="#4a4b4d"/><rect x="0.8" y="0.8" width="10.4" height="3.2" fill="#5b5c5e"/><rect x="0.8" y="4.9" width="10.4" height="3.2" fill="#5b5c5e"/><rect x="0.8" y="9" width="10.4" height="3.2" fill="#5b5c5e"/></svg>
<div style="left:93px;top:634px;width:15px;height:103.5px;background:#242529;border-radius:3px"></div>
<div style="left:96px;top:648px;width:9px;height:1px;background:#235d84"></div>
<div style="left:96px;top:656px;width:9px;height:1px;background:#c9cbcd"></div>
<div style="left:96px;top:663px;width:9px;height:1px;background:#235d84"></div>
<div style="left:96px;top:671px;width:9px;height:1px;background:#235d84"></div>
<div style="left:96px;top:686px;width:9px;height:1px;background:#235d84"></div>
<div style="left:96px;top:701px;width:9px;height:1px;background:#235d84"></div>
<div style="left:96px;top:717px;width:9px;height:1px;background:#235d84"></div>
<div style="left:96px;top:732px;width:9px;height:1px;background:#235d84"></div>
<div class="t" style="left:56px;top:645.8000000000001px;font-size:8px;color:#d9dbdd;letter-spacing:-0.2px;width:35px;text-align:right;">6</div>
<div class="t" style="left:56px;top:655.7px;font-size:8px;color:#d9dbdd;letter-spacing:-0.2px;width:35px;text-align:right;">-3</div>
<div class="t" style="left:56px;top:663.8000000000001px;font-size:8px;color:#d9dbdd;letter-spacing:-0.2px;width:35px;text-align:right;">-9</div>
<div class="t" style="left:56px;top:682.5px;font-size:8px;color:#d9dbdd;letter-spacing:-0.2px;width:35px;text-align:right;">-24</div>
<div class="t" style="left:56px;top:698.5px;font-size:8px;color:#d9dbdd;letter-spacing:-0.2px;width:35px;text-align:right;">-36</div>
<div class="t" style="left:56px;top:713.8000000000001px;font-size:8px;color:#d9dbdd;letter-spacing:-0.2px;width:35px;text-align:right;">-48</div>
<div style="left:113px;top:691px;width:14px;height:46px;background:#6d7279;border-radius:0 0 3px 3px"></div>
<div style="left:113px;top:694px;width:14px;height:1px;background:#80858c"></div>
<div style="left:113px;top:704px;width:14px;height:1px;background:#80858c"></div>
<div style="left:113px;top:710px;width:14px;height:1px;background:#80858c"></div>
<div style="left:119.2px;top:650px;width:2px;height:71px;background:#17181a"></div>
<div style="left:110.6px;top:654.8px;width:19px;height:36.6px;border-radius:3px;background:#262626;box-shadow:0 1px 1.5px rgba(0,0,0,.45);overflow:hidden"><div style="left:1px;top:1px;width:17px;height:34.6px;border-radius:2px;background:linear-gradient(#f6f6f6 0,#f0f0f0 3px,#7e7e7e 3.6px,#9c9c9c 4.4px,#b8b8b8 6px,#e0e0e0 9px,#ffffff 11.5px,#ffffff 17.3px,#4a4a4a 17.4px,#4a4a4a 18.3px,#ffffff 18.4px,#ffffff 26px,#d8d8d8 28.5px,#8a8a8a 30px,#ececec 30.9px,#f6f6f6 34.6px)"></div><div style="left:1px;top:1px;width:17px;height:34.6px;border-radius:2px;background:linear-gradient(90deg,rgba(80,80,80,.5) 0,rgba(255,255,255,0) 3px,rgba(255,255,255,0) 14px,rgba(80,80,80,.5) 17px)"></div></div>
<svg width="20" height="20" style="left:134.6px;top:717.6px"><circle cx="10" cy="10" r="8.45" fill="#bdc1c5"/><rect x="4.6" y="6.4" width="4.7" height="6.9" rx="0.6" fill="#5c6168"/><rect x="10.5" y="6.4" width="1.7" height="6.9" fill="#5c6168"/><rect x="13.6" y="6.4" width="1.7" height="6.9" fill="#5c6168"/></svg>
<div class="t" style="left:93px;top:746.6px;font-size:11.5px;color:#eef0f3;">4</div>
<svg width="17" height="15" style="left:137px;top:744px"><path d="M3.1,8.0 L5.2,2.3 L7.0,8.0 Z M9.3,8.0 L11.2,0.6 L13.1,8.0 Z M0.0,7.5 L3.4,7.5 L1.7,13.2 Z M6.5,7.5 L9.7,7.5 L8.1,14.0 Z M12.7,7.5 L16.1,7.5 L14.2,13.2 Z M0,7.3 H16.2 V8.4 H0 Z" fill="#e4e6e8"/></svg>
<div style="left:84px;top:763px;width:71px;height:16px;background:#29292c;border-radius:2px"></div>
<div class="t" style="left:84px;top:766.3px;font-size:10.6px;color:#84878b;width:71px;text-align:center;">Auto: Off</div>
<div style="left:77px;top:784.5px;width:85px;height:14.5px;background:#069bd6;border-radius:0 0 5px 5px"></div>
<div class="t" style="left:77px;top:786px;font-size:11.6px;color:#ffffff;width:85px;text-align:center;">Spur 2</div>
<div style="left:164px;top:394px;width:85px;height:3px;background:#00c7e9"></div>
<div style="left:164px;top:477px;width:85px;height:3px;background:#00c7e9"></div>
<div style="left:164px;top:480px;width:85px;height:1px;background:#1a1b1e"></div>
<div style="left:164px;top:397px;width:85px;height:57px;background:#3b3e43"></div>
<div style="left:164px;top:397px;width:85px;height:21px;background:#3b3e43"></div>
<div style="left:164px;top:455px;width:85px;height:20px;background:#3b3e43"></div>
<svg width="12" height="12" viewBox="0 0 12 12" style="left:166.9px;top:400.9px"><path d="M3.3,2.6 A4.7,4.7 0 1 0 8.7,2.6" fill="none" stroke="#6a6d71" stroke-width="1.9"/><rect x="5.15" y="1.2" width="1.7" height="4.4" rx="0.5" fill="#6a6d71"/></svg>
<div class="t" style="left:181px;top:402px;font-size:11px;color:#c3c6cc;">Inserts</div>
<svg width="8" height="6" viewBox="0 0 8 6" style="left:224px;top:405px"><path d="M0,0 H8 L4,5.5 Z" fill="#7c7f84"/></svg>
<svg width="8" height="8" viewBox="0 0 8 8" style="left:237px;top:403.3px"><rect x="3.15" y="0" width="1.7" height="8" fill="#8d9095"/><rect x="0" y="3.15" width="8" height="1.7" fill="#8d9095"/></svg>
<svg width="12" height="12" viewBox="0 0 12 12" style="left:166.9px;top:458.0px"><path d="M3.3,2.6 A4.7,4.7 0 1 0 8.7,2.6" fill="none" stroke="#6a6d71" stroke-width="1.9"/><rect x="5.15" y="1.2" width="1.7" height="4.4" rx="0.5" fill="#6a6d71"/></svg>
<div class="t" style="left:181px;top:459px;font-size:11px;color:#c3c6cc;">Sends</div>
<svg width="8" height="6" viewBox="0 0 8 6" style="left:224px;top:462px"><path d="M0,0 H8 L4,5.5 Z" fill="#7c7f84"/></svg>
<svg width="8" height="8" viewBox="0 0 8 8" style="left:237px;top:460.3px"><rect x="3.15" y="0" width="1.7" height="8" fill="#8d9095"/><rect x="0" y="3.15" width="8" height="1.7" fill="#8d9095"/></svg>
<div style="left:164px;top:481px;width:85px;height:303px;background:#3b3e43"></div>
<div style="left:168px;top:485.2px;width:77px;height:15.8px;background:#303236;border:1px solid #232529;border-radius:3px"></div>
<div class="t" style="left:168px;top:487.9px;font-size:11.5px;color:#dfe3e8;width:77px;text-align:center;">MS</div>
<div style="left:168px;top:505.2px;width:77px;height:15.8px;background:#303236;border:1px solid #232529;border-radius:3px"></div>
<div class="t" style="left:168px;top:507.9px;font-size:11.5px;color:#dfe3e8;width:77px;text-align:center;">MS</div>
<div style="left:172.1px;top:564px;width:68.8px;height:41.6px;background:#1d1e21;border-radius:3px"></div>
<div style="left:173.1px;top:565px;width:33px;height:19px;background:#3c3f44;border-top:1px solid #4a4d52;border-radius:2px 0 0 0"></div>
<div style="left:207.1px;top:565px;width:32.8px;height:19px;background:#3c3f44;border-top:1px solid #4a4d52;border-radius:0 2px 0 0"></div>
<div class="t" style="left:173.1px;top:569px;font-size:12px;color:#e3e6ea;width:32.5px;text-align:center;">M</div>
<div class="t" style="left:207.1px;top:569px;font-size:12px;color:#e3e6ea;width:32.8px;text-align:center;">S</div>
<div style="left:173.1px;top:585.2px;width:33px;height:19.4px;background:#3c3f44;border-top:1px solid #4a4d52"></div>
<div style="left:207.1px;top:585.2px;width:32.8px;height:19.4px;background:#3c3f44;border-top:1px solid #4a4d52"></div>
<svg width="12" height="12" style="left:182.6px;top:589.2px"><circle cx="6" cy="6" r="4.7" fill="#c3c4c6"/></svg>
<svg width="12" height="12" style="left:216.6px;top:589.2px"><path d="M6,1.3 A4.7,4.7 0 0 0 6,10.7 Z" fill="#c3c4c6"/><path d="M6.8,1.5 A4.5,4.5 0 0 1 6.8,10.5" fill="none" stroke="#c3c4c6" stroke-width="1.1"/></svg>
<div class="t" style="left:164px;top:616px;font-size:11.5px;color:#e6e9ee;width:79px;text-align:center;">-2.4</div>
<svg width="12" height="13" style="left:224.5px;top:633px"><rect x="0" y="0" width="12" height="13" rx="1.2" fill="#38393b"/><rect x="0.8" y="0.8" width="10.4" height="3.2" fill="#535556"/><rect x="0.8" y="4.9" width="10.4" height="3.2" fill="#535556"/><rect x="0.8" y="9" width="10.4" height="3.2" fill="#535556"/></svg>
<div style="left:180px;top:634px;width:15px;height:103.5px;background:#242529;border-radius:3px"></div>
<div style="left:183px;top:648px;width:9px;height:1px;background:#235d84"></div>
<div style="left:183px;top:656px;width:9px;height:1px;background:#235d84"></div>
<div style="left:183px;top:668px;width:9px;height:1px;background:#c9cbcd"></div>
<div style="left:183px;top:680px;width:9px;height:1px;background:#235d84"></div>
<div style="left:183px;top:690px;width:9px;height:1px;background:#235d84"></div>
<div style="left:183px;top:702px;width:9px;height:1px;background:#235d84"></div>
<div style="left:183px;top:715px;width:9px;height:1px;background:#235d84"></div>
<div style="left:183px;top:723px;width:9px;height:1px;background:#235d84"></div>
<div style="left:183px;top:729px;width:9px;height:1px;background:#235d84"></div>
<div class="t" style="left:143px;top:645.6px;font-size:8px;color:#d9dbdd;letter-spacing:-0.2px;width:35px;text-align:right;">10</div>
<div class="t" style="left:143px;top:652.8000000000001px;font-size:8px;color:#d9dbdd;letter-spacing:-0.2px;width:35px;text-align:right;">6</div>
<div class="t" style="left:143px;top:664.4px;font-size:8px;color:#d9dbdd;letter-spacing:-0.2px;width:35px;text-align:right;">0</div>
<div class="t" style="left:143px;top:676.5px;font-size:8px;color:#d9dbdd;letter-spacing:-0.2px;width:35px;text-align:right;">-6</div>
<div class="t" style="left:143px;top:686.5px;font-size:8px;color:#d9dbdd;letter-spacing:-0.2px;width:35px;text-align:right;">-12</div>
<div class="t" style="left:143px;top:699.4px;font-size:8px;color:#d9dbdd;letter-spacing:-0.2px;width:35px;text-align:right;">-24</div>
<div class="t" style="left:143px;top:711.4px;font-size:8px;color:#d9dbdd;letter-spacing:-0.2px;width:35px;text-align:right;">-36</div>
<div class="t" style="left:143px;top:719.1px;font-size:8px;color:#d9dbdd;letter-spacing:-0.2px;width:35px;text-align:right;">-48</div>
<div style="left:200px;top:690px;width:14px;height:47px;background:#54575d;border-radius:0 0 3px 3px"></div>
<div style="left:200px;top:694px;width:14px;height:1px;background:#6b6e74"></div>
<div style="left:200px;top:704px;width:14px;height:1px;background:#6b6e74"></div>
<div style="left:200px;top:710px;width:14px;height:1px;background:#6b6e74"></div>
<div style="left:206.2px;top:650px;width:2px;height:71px;background:#17181a"></div>
<div style="left:197.6px;top:653.8px;width:19px;height:36.6px;border-radius:3px;background:#262626;box-shadow:0 1px 1.5px rgba(0,0,0,.45);overflow:hidden"><div style="left:1px;top:1px;width:17px;height:34.6px;border-radius:2px;background:linear-gradient(#f6f6f6 0,#f0f0f0 3px,#7e7e7e 3.6px,#9c9c9c 4.4px,#b8b8b8 6px,#e0e0e0 9px,#ffffff 11.5px,#ffffff 17.3px,#4a4a4a 17.4px,#4a4a4a 18.3px,#ffffff 18.4px,#ffffff 26px,#d8d8d8 28.5px,#8a8a8a 30px,#ececec 30.9px,#f6f6f6 34.6px)"></div><div style="left:1px;top:1px;width:17px;height:34.6px;border-radius:2px;background:linear-gradient(90deg,rgba(80,80,80,.5) 0,rgba(255,255,255,0) 3px,rgba(255,255,255,0) 14px,rgba(80,80,80,.5) 17px)"></div></div>
<svg width="20" height="20" style="left:221.6px;top:717.6px"><circle cx="10" cy="10" r="8.45" fill="#8f9398"/><rect x="4.6" y="6.4" width="4.7" height="6.9" rx="0.6" fill="#3b3e43"/><rect x="10.5" y="6.4" width="1.7" height="6.9" fill="#3b3e43"/><rect x="13.6" y="6.4" width="1.7" height="6.9" fill="#3b3e43"/></svg>
<div class="t" style="left:180px;top:746.6px;font-size:11.5px;color:#eef0f3;">5</div>
<svg width="17" height="15" style="left:224px;top:744px"><path d="M3.1,8.0 L5.2,2.3 L7.0,8.0 Z M9.3,8.0 L11.2,0.6 L13.1,8.0 Z M0.0,7.5 L3.4,7.5 L1.7,13.2 Z M6.5,7.5 L9.7,7.5 L8.1,14.0 Z M12.7,7.5 L16.1,7.5 L14.2,13.2 Z M0,7.3 H16.2 V8.4 H0 Z" fill="#e4e6e8"/></svg>
<div style="left:171px;top:763px;width:71px;height:16px;background:#29292c;border-radius:2px"></div>
<div class="t" style="left:171px;top:766.3px;font-size:10.6px;color:#84878b;width:71px;text-align:center;">Auto: Off</div>
<div style="left:164px;top:784.5px;width:85px;height:14.5px;background:#00c7e9;border-radius:0 0 5px 5px"></div>
<div class="t" style="left:164px;top:786px;font-size:11.6px;color:#111111;width:85px;text-align:center;">Spur 3</div>
<div style="left:251px;top:394px;width:85px;height:3px;background:#00ffff"></div>
<div style="left:251px;top:477px;width:85px;height:3px;background:#00ffff"></div>
<div style="left:251px;top:480px;width:85px;height:1px;background:#1a1b1e"></div>
<div style="left:251px;top:397px;width:85px;height:57px;background:#3b3e43"></div>
<div style="left:251px;top:397px;width:85px;height:21px;background:#3b3e43"></div>
<div style="left:251px;top:455px;width:85px;height:20px;background:#3b3e43"></div>
<svg width="12" height="12" viewBox="0 0 12 12" style="left:253.9px;top:400.9px"><path d="M3.3,2.6 A4.7,4.7 0 1 0 8.7,2.6" fill="none" stroke="#6a6d71" stroke-width="1.9"/><rect x="5.15" y="1.2" width="1.7" height="4.4" rx="0.5" fill="#6a6d71"/></svg>
<div class="t" style="left:268px;top:402px;font-size:11px;color:#c3c6cc;">Inserts</div>
<svg width="8" height="6" viewBox="0 0 8 6" style="left:311px;top:405px"><path d="M0,0 H8 L4,5.5 Z" fill="#7c7f84"/></svg>
<svg width="8" height="8" viewBox="0 0 8 8" style="left:324px;top:403.3px"><rect x="3.15" y="0" width="1.7" height="8" fill="#8d9095"/><rect x="0" y="3.15" width="8" height="1.7" fill="#8d9095"/></svg>
<svg width="12" height="12" viewBox="0 0 12 12" style="left:253.9px;top:458.0px"><path d="M3.3,2.6 A4.7,4.7 0 1 0 8.7,2.6" fill="none" stroke="#6a6d71" stroke-width="1.9"/><rect x="5.15" y="1.2" width="1.7" height="4.4" rx="0.5" fill="#6a6d71"/></svg>
<div class="t" style="left:268px;top:459px;font-size:11px;color:#c3c6cc;">Sends</div>
<svg width="8" height="6" viewBox="0 0 8 6" style="left:311px;top:462px"><path d="M0,0 H8 L4,5.5 Z" fill="#7c7f84"/></svg>
<svg width="8" height="8" viewBox="0 0 8 8" style="left:324px;top:460.3px"><rect x="3.15" y="0" width="1.7" height="8" fill="#8d9095"/><rect x="0" y="3.15" width="8" height="1.7" fill="#8d9095"/></svg>
<div style="left:251px;top:481px;width:85px;height:303px;background:#3b3e43"></div>
<div style="left:255px;top:485.2px;width:77px;height:15.8px;background:#303236;border:1px solid #232529;border-radius:3px"></div>
<div class="t" style="left:255px;top:487.9px;font-size:11.5px;color:#dfe3e8;width:77px;text-align:center;">SS</div>
<div style="left:255px;top:505.2px;width:77px;height:15.8px;background:#303236;border:1px solid #232529;border-radius:3px"></div>
<div class="t" style="left:255px;top:507.9px;font-size:11.5px;color:#dfe3e8;width:77px;text-align:center;">SS</div>
<div style="left:259.1px;top:564px;width:68.8px;height:41.6px;background:#1d1e21;border-radius:3px"></div>
<div style="left:260.1px;top:565px;width:33px;height:19px;background:#3c3f44;border-top:1px solid #4a4d52;border-radius:2px 0 0 0"></div>
<div style="left:294.1px;top:565px;width:32.8px;height:19px;background:#3c3f44;border-top:1px solid #4a4d52;border-radius:0 2px 0 0"></div>
<div class="t" style="left:260.1px;top:569px;font-size:12px;color:#e3e6ea;width:32.5px;text-align:center;">M</div>
<div class="t" style="left:294.1px;top:569px;font-size:12px;color:#e3e6ea;width:32.8px;text-align:center;">S</div>
<div style="left:260.1px;top:585.2px;width:33px;height:19.4px;background:#3c3f44;border-top:1px solid #4a4d52"></div>
<div style="left:294.1px;top:585.2px;width:32.8px;height:19.4px;background:#3c3f44;border-top:1px solid #4a4d52"></div>
<svg width="12" height="12" style="left:269.6px;top:589.2px"><circle cx="6" cy="6" r="4.7" fill="#c3c4c6"/></svg>
<svg width="12" height="12" style="left:303.6px;top:589.2px"><path d="M6,1.3 A4.7,4.7 0 0 0 6,10.7 Z" fill="#c3c4c6"/><path d="M6.8,1.5 A4.5,4.5 0 0 1 6.8,10.5" fill="none" stroke="#c3c4c6" stroke-width="1.1"/></svg>
<div class="t" style="left:251px;top:616px;font-size:11.5px;color:#e6e9ee;width:79px;text-align:center;">-1.1</div>
<svg width="12" height="13" style="left:311.5px;top:633px"><rect x="0" y="0" width="12" height="13" rx="1.2" fill="#38393b"/><rect x="0.8" y="0.8" width="10.4" height="3.2" fill="#535556"/><rect x="0.8" y="4.9" width="10.4" height="3.2" fill="#535556"/><rect x="0.8" y="9" width="10.4" height="3.2" fill="#535556"/></svg>
<div style="left:267px;top:634px;width:15px;height:103.5px;background:#242529;border-radius:3px"></div>
<div style="left:270px;top:648px;width:9px;height:1px;background:#235d84"></div>
<div style="left:270px;top:656px;width:9px;height:1px;background:#235d84"></div>
<div style="left:270px;top:668px;width:9px;height:1px;background:#c9cbcd"></div>
<div style="left:270px;top:680px;width:9px;height:1px;background:#235d84"></div>
<div style="left:270px;top:690px;width:9px;height:1px;background:#235d84"></div>
<div style="left:270px;top:702px;width:9px;height:1px;background:#235d84"></div>
<div style="left:270px;top:715px;width:9px;height:1px;background:#235d84"></div>
<div style="left:270px;top:723px;width:9px;height:1px;background:#235d84"></div>
<div style="left:270px;top:729px;width:9px;height:1px;background:#235d84"></div>
<div class="t" style="left:230px;top:645.6px;font-size:8px;color:#d9dbdd;letter-spacing:-0.2px;width:35px;text-align:right;">10</div>
<div class="t" style="left:230px;top:652.8000000000001px;font-size:8px;color:#d9dbdd;letter-spacing:-0.2px;width:35px;text-align:right;">6</div>
<div class="t" style="left:230px;top:664.4px;font-size:8px;color:#d9dbdd;letter-spacing:-0.2px;width:35px;text-align:right;">0</div>
<div class="t" style="left:230px;top:676.5px;font-size:8px;color:#d9dbdd;letter-spacing:-0.2px;width:35px;text-align:right;">-6</div>
<div class="t" style="left:230px;top:686.5px;font-size:8px;color:#d9dbdd;letter-spacing:-0.2px;width:35px;text-align:right;">-12</div>
<div class="t" style="left:230px;top:699.4px;font-size:8px;color:#d9dbdd;letter-spacing:-0.2px;width:35px;text-align:right;">-24</div>
<div class="t" style="left:230px;top:711.4px;font-size:8px;color:#d9dbdd;letter-spacing:-0.2px;width:35px;text-align:right;">-36</div>
<div class="t" style="left:230px;top:719.1px;font-size:8px;color:#d9dbdd;letter-spacing:-0.2px;width:35px;text-align:right;">-48</div>
<div style="left:287px;top:688px;width:14px;height:49px;background:#54575d;border-radius:0 0 3px 3px"></div>
<div style="left:287px;top:694px;width:14px;height:1px;background:#6b6e74"></div>
<div style="left:287px;top:704px;width:14px;height:1px;background:#6b6e74"></div>
<div style="left:287px;top:710px;width:14px;height:1px;background:#6b6e74"></div>
<div style="left:293.2px;top:650px;width:2px;height:71px;background:#17181a"></div>
<div style="left:284.6px;top:651.8px;width:19px;height:36.6px;border-radius:3px;background:#262626;box-shadow:0 1px 1.5px rgba(0,0,0,.45);overflow:hidden"><div style="left:1px;top:1px;width:17px;height:34.6px;border-radius:2px;background:linear-gradient(#f6f6f6 0,#f0f0f0 3px,#7e7e7e 3.6px,#9c9c9c 4.4px,#b8b8b8 6px,#e0e0e0 9px,#ffffff 11.5px,#ffffff 17.3px,#4a4a4a 17.4px,#4a4a4a 18.3px,#ffffff 18.4px,#ffffff 26px,#d8d8d8 28.5px,#8a8a8a 30px,#ececec 30.9px,#f6f6f6 34.6px)"></div><div style="left:1px;top:1px;width:17px;height:34.6px;border-radius:2px;background:linear-gradient(90deg,rgba(80,80,80,.5) 0,rgba(255,255,255,0) 3px,rgba(255,255,255,0) 14px,rgba(80,80,80,.5) 17px)"></div></div>
<svg width="20" height="20" style="left:308.6px;top:717.6px"><circle cx="10" cy="10" r="8.45" fill="#8f9398"/><rect x="4.6" y="6.4" width="4.7" height="6.9" rx="0.6" fill="#3b3e43"/><rect x="10.5" y="6.4" width="1.7" height="6.9" fill="#3b3e43"/><rect x="13.6" y="6.4" width="1.7" height="6.9" fill="#3b3e43"/></svg>
<div class="t" style="left:267px;top:746.6px;font-size:11.5px;color:#eef0f3;">6</div>
<svg width="17" height="15" style="left:311px;top:744px"><path d="M3.1,8.0 L5.2,2.3 L7.0,8.0 Z M9.3,8.0 L11.2,0.6 L13.1,8.0 Z M0.0,7.5 L3.4,7.5 L1.7,13.2 Z M6.5,7.5 L9.7,7.5 L8.1,14.0 Z M12.7,7.5 L16.1,7.5 L14.2,13.2 Z M0,7.3 H16.2 V8.4 H0 Z" fill="#e4e6e8"/></svg>
<div style="left:258px;top:763px;width:71px;height:16px;background:#29292c;border-radius:2px"></div>
<div class="t" style="left:258px;top:766.3px;font-size:10.6px;color:#84878b;width:71px;text-align:center;">Auto: Off</div>
<div style="left:251px;top:784.5px;width:85px;height:14.5px;background:#00ffff;border-radius:0 0 5px 5px"></div>
<div class="t" style="left:251px;top:786px;font-size:11.6px;color:#111111;width:85px;text-align:center;">Spur 6</div>
<div style="left:338px;top:394px;width:85px;height:3px;background:#00dfc6"></div>
<div style="left:338px;top:477px;width:85px;height:3px;background:#00dfc6"></div>
<div style="left:338px;top:480px;width:85px;height:1px;background:#1a1b1e"></div>
<div style="left:338px;top:397px;width:85px;height:57px;background:#3b3e43"></div>
<div style="left:338px;top:397px;width:85px;height:21px;background:#3b3e43"></div>
<div style="left:338px;top:455px;width:85px;height:20px;background:#3b3e43"></div>
<svg width="12" height="12" viewBox="0 0 12 12" style="left:340.9px;top:400.9px"><path d="M3.3,2.6 A4.7,4.7 0 1 0 8.7,2.6" fill="none" stroke="#6a6d71" stroke-width="1.9"/><rect x="5.15" y="1.2" width="1.7" height="4.4" rx="0.5" fill="#6a6d71"/></svg>
<div class="t" style="left:355px;top:402px;font-size:11px;color:#c3c6cc;">Inserts</div>
<svg width="8" height="6" viewBox="0 0 8 6" style="left:398px;top:405px"><path d="M0,0 H8 L4,5.5 Z" fill="#7c7f84"/></svg>
<svg width="8" height="8" viewBox="0 0 8 8" style="left:411px;top:403.3px"><rect x="3.15" y="0" width="1.7" height="8" fill="#8d9095"/><rect x="0" y="3.15" width="8" height="1.7" fill="#8d9095"/></svg>
<svg width="12" height="12" viewBox="0 0 12 12" style="left:340.9px;top:458.0px"><path d="M3.3,2.6 A4.7,4.7 0 1 0 8.7,2.6" fill="none" stroke="#6a6d71" stroke-width="1.9"/><rect x="5.15" y="1.2" width="1.7" height="4.4" rx="0.5" fill="#6a6d71"/></svg>
<div class="t" style="left:355px;top:459px;font-size:11px;color:#c3c6cc;">Sends</div>
<svg width="8" height="6" viewBox="0 0 8 6" style="left:398px;top:462px"><path d="M0,0 H8 L4,5.5 Z" fill="#7c7f84"/></svg>
<svg width="8" height="8" viewBox="0 0 8 8" style="left:411px;top:460.3px"><rect x="3.15" y="0" width="1.7" height="8" fill="#8d9095"/><rect x="0" y="3.15" width="8" height="1.7" fill="#8d9095"/></svg>
<div style="left:338px;top:481px;width:85px;height:303px;background:#3b3e43"></div>
<div style="left:342px;top:485.2px;width:77px;height:15.8px;background:#303236;border:1px solid #232529;border-radius:3px"></div>
<div class="t" style="left:342px;top:487.9px;font-size:11.5px;color:#dfe3e8;width:77px;text-align:center;">OH-L</div>
<div style="left:342px;top:505.2px;width:77px;height:15.8px;background:#303236;border:1px solid #232529;border-radius:3px"></div>
<div class="t" style="left:342px;top:507.9px;font-size:11.5px;color:#dfe3e8;width:77px;text-align:center;">OH-L</div>
<div style="left:346.1px;top:564px;width:68.8px;height:41.6px;background:#1d1e21;border-radius:3px"></div>
<div style="left:347.1px;top:565px;width:33px;height:19px;background:#3c3f44;border-top:1px solid #4a4d52;border-radius:2px 0 0 0"></div>
<div style="left:381.1px;top:565px;width:32.8px;height:19px;background:#3c3f44;border-top:1px solid #4a4d52;border-radius:0 2px 0 0"></div>
<div class="t" style="left:347.1px;top:569px;font-size:12px;color:#e3e6ea;width:32.5px;text-align:center;">M</div>
<div class="t" style="left:381.1px;top:569px;font-size:12px;color:#e3e6ea;width:32.8px;text-align:center;">S</div>
<div style="left:347.1px;top:585.2px;width:33px;height:19.4px;background:#3c3f44;border-top:1px solid #4a4d52"></div>
<div style="left:381.1px;top:585.2px;width:32.8px;height:19.4px;background:#3c3f44;border-top:1px solid #4a4d52"></div>
<svg width="12" height="12" style="left:356.6px;top:589.2px"><circle cx="6" cy="6" r="4.7" fill="#c3c4c6"/></svg>
<svg width="12" height="12" style="left:390.6px;top:589.2px"><path d="M6,1.3 A4.7,4.7 0 0 0 6,10.7 Z" fill="#c3c4c6"/><path d="M6.8,1.5 A4.5,4.5 0 0 1 6.8,10.5" fill="none" stroke="#c3c4c6" stroke-width="1.1"/></svg>
<div class="t" style="left:338px;top:616px;font-size:11.5px;color:#e6e9ee;width:79px;text-align:center;">+0.9</div>
<svg width="12" height="13" style="left:398.5px;top:633px"><rect x="0" y="0" width="12" height="13" rx="1.2" fill="#38393b"/><rect x="0.8" y="0.8" width="10.4" height="3.2" fill="#535556"/><rect x="0.8" y="4.9" width="10.4" height="3.2" fill="#535556"/><rect x="0.8" y="9" width="10.4" height="3.2" fill="#535556"/></svg>
<div style="left:354px;top:634px;width:15px;height:103.5px;background:#242529;border-radius:3px"></div>
<div style="left:357px;top:648px;width:9px;height:1px;background:#235d84"></div>
<div style="left:357px;top:656px;width:9px;height:1px;background:#235d84"></div>
<div style="left:357px;top:668px;width:9px;height:1px;background:#c9cbcd"></div>
<div style="left:357px;top:680px;width:9px;height:1px;background:#235d84"></div>
<div style="left:357px;top:690px;width:9px;height:1px;background:#235d84"></div>
<div style="left:357px;top:702px;width:9px;height:1px;background:#235d84"></div>
<div style="left:357px;top:715px;width:9px;height:1px;background:#235d84"></div>
<div style="left:357px;top:723px;width:9px;height:1px;background:#235d84"></div>
<div style="left:357px;top:729px;width:9px;height:1px;background:#235d84"></div>
<div class="t" style="left:317px;top:645.6px;font-size:8px;color:#d9dbdd;letter-spacing:-0.2px;width:35px;text-align:right;">10</div>
<div class="t" style="left:317px;top:652.8000000000001px;font-size:8px;color:#d9dbdd;letter-spacing:-0.2px;width:35px;text-align:right;">6</div>
<div class="t" style="left:317px;top:664.4px;font-size:8px;color:#d9dbdd;letter-spacing:-0.2px;width:35px;text-align:right;">0</div>
<div class="t" style="left:317px;top:676.5px;font-size:8px;color:#d9dbdd;letter-spacing:-0.2px;width:35px;text-align:right;">-6</div>
<div class="t" style="left:317px;top:686.5px;font-size:8px;color:#d9dbdd;letter-spacing:-0.2px;width:35px;text-align:right;">-12</div>
<div class="t" style="left:317px;top:699.4px;font-size:8px;color:#d9dbdd;letter-spacing:-0.2px;width:35px;text-align:right;">-24</div>
<div class="t" style="left:317px;top:711.4px;font-size:8px;color:#d9dbdd;letter-spacing:-0.2px;width:35px;text-align:right;">-36</div>
<div class="t" style="left:317px;top:719.1px;font-size:8px;color:#d9dbdd;letter-spacing:-0.2px;width:35px;text-align:right;">-48</div>
<div style="left:374px;top:685px;width:14px;height:52px;background:#54575d;border-radius:0 0 3px 3px"></div>
<div style="left:374px;top:694px;width:14px;height:1px;background:#6b6e74"></div>
<div style="left:374px;top:704px;width:14px;height:1px;background:#6b6e74"></div>
<div style="left:374px;top:710px;width:14px;height:1px;background:#6b6e74"></div>
<div style="left:380.2px;top:650px;width:2px;height:71px;background:#17181a"></div>
<div style="left:371.6px;top:648.8px;width:19px;height:36.6px;border-radius:3px;background:#262626;box-shadow:0 1px 1.5px rgba(0,0,0,.45);overflow:hidden"><div style="left:1px;top:1px;width:17px;height:34.6px;border-radius:2px;background:linear-gradient(#f6f6f6 0,#f0f0f0 3px,#7e7e7e 3.6px,#9c9c9c 4.4px,#b8b8b8 6px,#e0e0e0 9px,#ffffff 11.5px,#ffffff 17.3px,#4a4a4a 17.4px,#4a4a4a 18.3px,#ffffff 18.4px,#ffffff 26px,#d8d8d8 28.5px,#8a8a8a 30px,#ececec 30.9px,#f6f6f6 34.6px)"></div><div style="left:1px;top:1px;width:17px;height:34.6px;border-radius:2px;background:linear-gradient(90deg,rgba(80,80,80,.5) 0,rgba(255,255,255,0) 3px,rgba(255,255,255,0) 14px,rgba(80,80,80,.5) 17px)"></div></div>
<svg width="20" height="20" style="left:395.6px;top:717.6px"><circle cx="10" cy="10" r="8.45" fill="#8f9398"/><rect x="4.6" y="6.4" width="4.7" height="6.9" rx="0.6" fill="#3b3e43"/><rect x="10.5" y="6.4" width="1.7" height="6.9" fill="#3b3e43"/><rect x="13.6" y="6.4" width="1.7" height="6.9" fill="#3b3e43"/></svg>
<div class="t" style="left:354px;top:746.6px;font-size:11.5px;color:#eef0f3;">7</div>
<svg width="17" height="15" style="left:398px;top:744px"><path d="M3.1,8.0 L5.2,2.3 L7.0,8.0 Z M9.3,8.0 L11.2,0.6 L13.1,8.0 Z M0.0,7.5 L3.4,7.5 L1.7,13.2 Z M6.5,7.5 L9.7,7.5 L8.1,14.0 Z M12.7,7.5 L16.1,7.5 L14.2,13.2 Z M0,7.3 H16.2 V8.4 H0 Z" fill="#e4e6e8"/></svg>
<div style="left:345px;top:763px;width:71px;height:16px;background:#29292c;border-radius:2px"></div>
<div class="t" style="left:345px;top:766.3px;font-size:10.6px;color:#84878b;width:71px;text-align:center;">Auto: Off</div>
<div style="left:338px;top:784.5px;width:85px;height:14.5px;background:#00dfc6;border-radius:0 0 5px 5px"></div>
<div class="t" style="left:338px;top:786px;font-size:11.6px;color:#111111;width:85px;text-align:center;">Spur 7</div>
<div style="left:425px;top:394px;width:85px;height:3px;background:#6ef59e"></div>
<div style="left:425px;top:477px;width:85px;height:3px;background:#6ef59e"></div>
<div style="left:425px;top:480px;width:85px;height:1px;background:#1a1b1e"></div>
<div style="left:425px;top:397px;width:85px;height:57px;background:#3b3e43"></div>
<div style="left:425px;top:397px;width:85px;height:21px;background:#3b3e43"></div>
<div style="left:425px;top:455px;width:85px;height:20px;background:#3b3e43"></div>
<svg width="12" height="12" viewBox="0 0 12 12" style="left:427.9px;top:400.9px"><path d="M3.3,2.6 A4.7,4.7 0 1 0 8.7,2.6" fill="none" stroke="#6a6d71" stroke-width="1.9"/><rect x="5.15" y="1.2" width="1.7" height="4.4" rx="0.5" fill="#6a6d71"/></svg>
<div class="t" style="left:442px;top:402px;font-size:11px;color:#c3c6cc;">Inserts</div>
<svg width="8" height="6" viewBox="0 0 8 6" style="left:485px;top:405px"><path d="M0,0 H8 L4,5.5 Z" fill="#7c7f84"/></svg>
<svg width="8" height="8" viewBox="0 0 8 8" style="left:498px;top:403.3px"><rect x="3.15" y="0" width="1.7" height="8" fill="#8d9095"/><rect x="0" y="3.15" width="8" height="1.7" fill="#8d9095"/></svg>
<svg width="12" height="12" viewBox="0 0 12 12" style="left:427.9px;top:458.0px"><path d="M3.3,2.6 A4.7,4.7 0 1 0 8.7,2.6" fill="none" stroke="#6a6d71" stroke-width="1.9"/><rect x="5.15" y="1.2" width="1.7" height="4.4" rx="0.5" fill="#6a6d71"/></svg>
<div class="t" style="left:442px;top:459px;font-size:11px;color:#c3c6cc;">Sends</div>
<svg width="8" height="6" viewBox="0 0 8 6" style="left:485px;top:462px"><path d="M0,0 H8 L4,5.5 Z" fill="#7c7f84"/></svg>
<svg width="8" height="8" viewBox="0 0 8 8" style="left:498px;top:460.3px"><rect x="3.15" y="0" width="1.7" height="8" fill="#8d9095"/><rect x="0" y="3.15" width="8" height="1.7" fill="#8d9095"/></svg>
<div style="left:425px;top:481px;width:85px;height:303px;background:#3b3e43"></div>
<div style="left:429px;top:485.2px;width:77px;height:15.8px;background:#303236;border:1px solid #232529;border-radius:3px"></div>
<div class="t" style="left:429px;top:487.9px;font-size:11.5px;color:#dfe3e8;width:77px;text-align:center;">OH-R</div>
<div style="left:429px;top:505.2px;width:77px;height:15.8px;background:#303236;border:1px solid #232529;border-radius:3px"></div>
<div class="t" style="left:429px;top:507.9px;font-size:11.5px;color:#dfe3e8;width:77px;text-align:center;">OH-R</div>
<div style="left:433.1px;top:564px;width:68.8px;height:41.6px;background:#1d1e21;border-radius:3px"></div>
<div style="left:434.1px;top:565px;width:33px;height:19px;background:#3c3f44;border-top:1px solid #4a4d52;border-radius:2px 0 0 0"></div>
<div style="left:468.1px;top:565px;width:32.8px;height:19px;background:#3c3f44;border-top:1px solid #4a4d52;border-radius:0 2px 0 0"></div>
<div class="t" style="left:434.1px;top:569px;font-size:12px;color:#e3e6ea;width:32.5px;text-align:center;">M</div>
<div class="t" style="left:468.1px;top:569px;font-size:12px;color:#e3e6ea;width:32.8px;text-align:center;">S</div>
<div style="left:434.1px;top:585.2px;width:33px;height:19.4px;background:#3c3f44;border-top:1px solid #4a4d52"></div>
<div style="left:468.1px;top:585.2px;width:32.8px;height:19.4px;background:#3c3f44;border-top:1px solid #4a4d52"></div>
<svg width="12" height="12" style="left:443.6px;top:589.2px"><circle cx="6" cy="6" r="4.7" fill="#c3c4c6"/></svg>
<svg width="12" height="12" style="left:477.6px;top:589.2px"><path d="M6,1.3 A4.7,4.7 0 0 0 6,10.7 Z" fill="#c3c4c6"/><path d="M6.8,1.5 A4.5,4.5 0 0 1 6.8,10.5" fill="none" stroke="#c3c4c6" stroke-width="1.1"/></svg>
<div class="t" style="left:425px;top:616px;font-size:11.5px;color:#e6e9ee;width:79px;text-align:center;">0dB</div>
<svg width="12" height="13" style="left:485.5px;top:633px"><rect x="0" y="0" width="12" height="13" rx="1.2" fill="#38393b"/><rect x="0.8" y="0.8" width="10.4" height="3.2" fill="#535556"/><rect x="0.8" y="4.9" width="10.4" height="3.2" fill="#535556"/><rect x="0.8" y="9" width="10.4" height="3.2" fill="#535556"/></svg>
<div style="left:441px;top:634px;width:15px;height:103.5px;background:#242529;border-radius:3px"></div>
<div style="left:444px;top:648px;width:9px;height:1px;background:#235d84"></div>
<div style="left:444px;top:656px;width:9px;height:1px;background:#235d84"></div>
<div style="left:444px;top:668px;width:9px;height:1px;background:#c9cbcd"></div>
<div style="left:444px;top:680px;width:9px;height:1px;background:#235d84"></div>
<div style="left:444px;top:690px;width:9px;height:1px;background:#235d84"></div>
<div style="left:444px;top:702px;width:9px;height:1px;background:#235d84"></div>
<div style="left:444px;top:715px;width:9px;height:1px;background:#235d84"></div>
<div style="left:444px;top:723px;width:9px;height:1px;background:#235d84"></div>
<div style="left:444px;top:729px;width:9px;height:1px;background:#235d84"></div>
<div class="t" style="left:404px;top:645.6px;font-size:8px;color:#d9dbdd;letter-spacing:-0.2px;width:35px;text-align:right;">10</div>
<div class="t" style="left:404px;top:652.8000000000001px;font-size:8px;color:#d9dbdd;letter-spacing:-0.2px;width:35px;text-align:right;">6</div>
<div class="t" style="left:404px;top:664.4px;font-size:8px;color:#d9dbdd;letter-spacing:-0.2px;width:35px;text-align:right;">0</div>
<div class="t" style="left:404px;top:676.5px;font-size:8px;color:#d9dbdd;letter-spacing:-0.2px;width:35px;text-align:right;">-6</div>
<div class="t" style="left:404px;top:686.5px;font-size:8px;color:#d9dbdd;letter-spacing:-0.2px;width:35px;text-align:right;">-12</div>
<div class="t" style="left:404px;top:699.4px;font-size:8px;color:#d9dbdd;letter-spacing:-0.2px;width:35px;text-align:right;">-24</div>
<div class="t" style="left:404px;top:711.4px;font-size:8px;color:#d9dbdd;letter-spacing:-0.2px;width:35px;text-align:right;">-36</div>
<div class="t" style="left:404px;top:719.1px;font-size:8px;color:#d9dbdd;letter-spacing:-0.2px;width:35px;text-align:right;">-48</div>
<div style="left:461px;top:686px;width:14px;height:51px;background:#54575d;border-radius:0 0 3px 3px"></div>
<div style="left:461px;top:694px;width:14px;height:1px;background:#6b6e74"></div>
<div style="left:461px;top:704px;width:14px;height:1px;background:#6b6e74"></div>
<div style="left:461px;top:710px;width:14px;height:1px;background:#6b6e74"></div>
<div style="left:467.2px;top:650px;width:2px;height:71px;background:#17181a"></div>
<div style="left:458.6px;top:649.8px;width:19px;height:36.6px;border-radius:3px;background:#262626;box-shadow:0 1px 1.5px rgba(0,0,0,.45);overflow:hidden"><div style="left:1px;top:1px;width:17px;height:34.6px;border-radius:2px;background:linear-gradient(#f6f6f6 0,#f0f0f0 3px,#7e7e7e 3.6px,#9c9c9c 4.4px,#b8b8b8 6px,#e0e0e0 9px,#ffffff 11.5px,#ffffff 17.3px,#4a4a4a 17.4px,#4a4a4a 18.3px,#ffffff 18.4px,#ffffff 26px,#d8d8d8 28.5px,#8a8a8a 30px,#ececec 30.9px,#f6f6f6 34.6px)"></div><div style="left:1px;top:1px;width:17px;height:34.6px;border-radius:2px;background:linear-gradient(90deg,rgba(80,80,80,.5) 0,rgba(255,255,255,0) 3px,rgba(255,255,255,0) 14px,rgba(80,80,80,.5) 17px)"></div></div>
<svg width="20" height="20" style="left:482.6px;top:717.6px"><circle cx="10" cy="10" r="8.45" fill="#8f9398"/><rect x="4.6" y="6.4" width="4.7" height="6.9" rx="0.6" fill="#3b3e43"/><rect x="10.5" y="6.4" width="1.7" height="6.9" fill="#3b3e43"/><rect x="13.6" y="6.4" width="1.7" height="6.9" fill="#3b3e43"/></svg>
<div class="t" style="left:441px;top:746.6px;font-size:11.5px;color:#eef0f3;">8</div>
<svg width="17" height="15" style="left:485px;top:744px"><path d="M3.1,8.0 L5.2,2.3 L7.0,8.0 Z M9.3,8.0 L11.2,0.6 L13.1,8.0 Z M0.0,7.5 L3.4,7.5 L1.7,13.2 Z M6.5,7.5 L9.7,7.5 L8.1,14.0 Z M12.7,7.5 L16.1,7.5 L14.2,13.2 Z M0,7.3 H16.2 V8.4 H0 Z" fill="#e4e6e8"/></svg>
<div style="left:432px;top:763px;width:71px;height:16px;background:#29292c;border-radius:2px"></div>
<div class="t" style="left:432px;top:766.3px;font-size:10.6px;color:#84878b;width:71px;text-align:center;">Auto: Off</div>
<div style="left:425px;top:784.5px;width:85px;height:14.5px;background:#6ef59e;border-radius:0 0 5px 5px"></div>
<div class="t" style="left:425px;top:786px;font-size:11.6px;color:#111111;width:85px;text-align:center;">Spur 8</div>
<div style="left:512px;top:394px;width:85px;height:3px;background:#a6f28e"></div>
<div style="left:512px;top:477px;width:85px;height:3px;background:#a6f28e"></div>
<div style="left:512px;top:480px;width:85px;height:1px;background:#1a1b1e"></div>
<div style="left:512px;top:397px;width:85px;height:57px;background:#3b3e43"></div>
<div style="left:512px;top:397px;width:85px;height:21px;background:#3b3e43"></div>
<div style="left:512px;top:455px;width:85px;height:20px;background:#3b3e43"></div>
<svg width="12" height="12" viewBox="0 0 12 12" style="left:514.9px;top:400.9px"><path d="M3.3,2.6 A4.7,4.7 0 1 0 8.7,2.6" fill="none" stroke="#6a6d71" stroke-width="1.9"/><rect x="5.15" y="1.2" width="1.7" height="4.4" rx="0.5" fill="#6a6d71"/></svg>
<div class="t" style="left:529px;top:402px;font-size:11px;color:#c3c6cc;">Inserts</div>
<svg width="8" height="6" viewBox="0 0 8 6" style="left:572px;top:405px"><path d="M0,0 H8 L4,5.5 Z" fill="#7c7f84"/></svg>
<svg width="8" height="8" viewBox="0 0 8 8" style="left:585px;top:403.3px"><rect x="3.15" y="0" width="1.7" height="8" fill="#8d9095"/><rect x="0" y="3.15" width="8" height="1.7" fill="#8d9095"/></svg>
<svg width="12" height="12" viewBox="0 0 12 12" style="left:514.9px;top:458.0px"><path d="M3.3,2.6 A4.7,4.7 0 1 0 8.7,2.6" fill="none" stroke="#6a6d71" stroke-width="1.9"/><rect x="5.15" y="1.2" width="1.7" height="4.4" rx="0.5" fill="#6a6d71"/></svg>
<div class="t" style="left:529px;top:459px;font-size:11px;color:#c3c6cc;">Sends</div>
<svg width="8" height="6" viewBox="0 0 8 6" style="left:572px;top:462px"><path d="M0,0 H8 L4,5.5 Z" fill="#7c7f84"/></svg>
<svg width="8" height="8" viewBox="0 0 8 8" style="left:585px;top:460.3px"><rect x="3.15" y="0" width="1.7" height="8" fill="#8d9095"/><rect x="0" y="3.15" width="8" height="1.7" fill="#8d9095"/></svg>
<div style="left:512px;top:481px;width:85px;height:303px;background:#3b3e43"></div>
<div style="left:516px;top:485.2px;width:77px;height:15.8px;background:#303236;border:1px solid #232529;border-radius:3px"></div>
<div class="t" style="left:516px;top:487.9px;font-size:11.5px;color:#dfe3e8;width:77px;text-align:center;">leer</div>
<div style="left:516px;top:505.2px;width:77px;height:15.8px;background:#303236;border:1px solid #232529;border-radius:3px"></div>
<div class="t" style="left:516px;top:507.9px;font-size:11.5px;color:#dfe3e8;width:77px;text-align:center;">leer</div>
<div style="left:520.1px;top:564px;width:68.8px;height:41.6px;background:#1d1e21;border-radius:3px"></div>
<div style="left:521.1px;top:565px;width:33px;height:19px;background:#3c3f44;border-top:1px solid #4a4d52;border-radius:2px 0 0 0"></div>
<div style="left:555.1px;top:565px;width:32.8px;height:19px;background:#3c3f44;border-top:1px solid #4a4d52;border-radius:0 2px 0 0"></div>
<div class="t" style="left:521.1px;top:569px;font-size:12px;color:#e3e6ea;width:32.5px;text-align:center;">M</div>
<div class="t" style="left:555.1px;top:569px;font-size:12px;color:#e3e6ea;width:32.8px;text-align:center;">S</div>
<div style="left:521.1px;top:585.2px;width:33px;height:19.4px;background:#3c3f44;border-top:1px solid #4a4d52"></div>
<div style="left:555.1px;top:585.2px;width:32.8px;height:19.4px;background:#3c3f44;border-top:1px solid #4a4d52"></div>
<svg width="12" height="12" style="left:530.6px;top:589.2px"><circle cx="6" cy="6" r="4.7" fill="#c3c4c6"/></svg>
<svg width="12" height="12" style="left:564.6px;top:589.2px"><path d="M6,1.3 A4.7,4.7 0 0 0 6,10.7 Z" fill="#c3c4c6"/><path d="M6.8,1.5 A4.5,4.5 0 0 1 6.8,10.5" fill="none" stroke="#c3c4c6" stroke-width="1.1"/></svg>
<div class="t" style="left:512px;top:616px;font-size:11.5px;color:#e6e9ee;width:79px;text-align:center;">0dB</div>
<svg width="12" height="13" style="left:572.5px;top:633px"><rect x="0" y="0" width="12" height="13" rx="1.2" fill="#38393b"/><rect x="0.8" y="0.8" width="10.4" height="3.2" fill="#535556"/><rect x="0.8" y="4.9" width="10.4" height="3.2" fill="#535556"/><rect x="0.8" y="9" width="10.4" height="3.2" fill="#535556"/></svg>
<div style="left:528px;top:634px;width:15px;height:103.5px;background:#242529;border-radius:3px"></div>
<div style="left:531px;top:648px;width:9px;height:1px;background:#235d84"></div>
<div style="left:531px;top:656px;width:9px;height:1px;background:#235d84"></div>
<div style="left:531px;top:668px;width:9px;height:1px;background:#c9cbcd"></div>
<div style="left:531px;top:680px;width:9px;height:1px;background:#235d84"></div>
<div style="left:531px;top:690px;width:9px;height:1px;background:#235d84"></div>
<div style="left:531px;top:702px;width:9px;height:1px;background:#235d84"></div>
<div style="left:531px;top:715px;width:9px;height:1px;background:#235d84"></div>
<div style="left:531px;top:723px;width:9px;height:1px;background:#235d84"></div>
<div style="left:531px;top:729px;width:9px;height:1px;background:#235d84"></div>
<div class="t" style="left:491px;top:645.6px;font-size:8px;color:#d9dbdd;letter-spacing:-0.2px;width:35px;text-align:right;">10</div>
<div class="t" style="left:491px;top:652.8000000000001px;font-size:8px;color:#d9dbdd;letter-spacing:-0.2px;width:35px;text-align:right;">6</div>
<div class="t" style="left:491px;top:664.4px;font-size:8px;color:#d9dbdd;letter-spacing:-0.2px;width:35px;text-align:right;">0</div>
<div class="t" style="left:491px;top:676.5px;font-size:8px;color:#d9dbdd;letter-spacing:-0.2px;width:35px;text-align:right;">-6</div>
<div class="t" style="left:491px;top:686.5px;font-size:8px;color:#d9dbdd;letter-spacing:-0.2px;width:35px;text-align:right;">-12</div>
<div class="t" style="left:491px;top:699.4px;font-size:8px;color:#d9dbdd;letter-spacing:-0.2px;width:35px;text-align:right;">-24</div>
<div class="t" style="left:491px;top:711.4px;font-size:8px;color:#d9dbdd;letter-spacing:-0.2px;width:35px;text-align:right;">-36</div>
<div class="t" style="left:491px;top:719.1px;font-size:8px;color:#d9dbdd;letter-spacing:-0.2px;width:35px;text-align:right;">-48</div>
<div style="left:548px;top:686px;width:14px;height:51px;background:#54575d;border-radius:0 0 3px 3px"></div>
<div style="left:548px;top:694px;width:14px;height:1px;background:#6b6e74"></div>
<div style="left:548px;top:704px;width:14px;height:1px;background:#6b6e74"></div>
<div style="left:548px;top:710px;width:14px;height:1px;background:#6b6e74"></div>
<div style="left:554.2px;top:650px;width:2px;height:71px;background:#17181a"></div>
<div style="left:545.6px;top:649.8px;width:19px;height:36.6px;border-radius:3px;background:#262626;box-shadow:0 1px 1.5px rgba(0,0,0,.45);overflow:hidden"><div style="left:1px;top:1px;width:17px;height:34.6px;border-radius:2px;background:linear-gradient(#f6f6f6 0,#f0f0f0 3px,#7e7e7e 3.6px,#9c9c9c 4.4px,#b8b8b8 6px,#e0e0e0 9px,#ffffff 11.5px,#ffffff 17.3px,#4a4a4a 17.4px,#4a4a4a 18.3px,#ffffff 18.4px,#ffffff 26px,#d8d8d8 28.5px,#8a8a8a 30px,#ececec 30.9px,#f6f6f6 34.6px)"></div><div style="left:1px;top:1px;width:17px;height:34.6px;border-radius:2px;background:linear-gradient(90deg,rgba(80,80,80,.5) 0,rgba(255,255,255,0) 3px,rgba(255,255,255,0) 14px,rgba(80,80,80,.5) 17px)"></div></div>
<svg width="20" height="20" style="left:569.6px;top:717.6px"><circle cx="10" cy="10" r="8.45" fill="#8f9398"/><rect x="4.6" y="6.4" width="4.7" height="6.9" rx="0.6" fill="#3b3e43"/><rect x="10.5" y="6.4" width="1.7" height="6.9" fill="#3b3e43"/><rect x="13.6" y="6.4" width="1.7" height="6.9" fill="#3b3e43"/></svg>
<div class="t" style="left:528px;top:746.6px;font-size:11.5px;color:#eef0f3;">9</div>
<svg width="17" height="15" style="left:572px;top:744px"><path d="M3.1,8.0 L5.2,2.3 L7.0,8.0 Z M9.3,8.0 L11.2,0.6 L13.1,8.0 Z M0.0,7.5 L3.4,7.5 L1.7,13.2 Z M6.5,7.5 L9.7,7.5 L8.1,14.0 Z M12.7,7.5 L16.1,7.5 L14.2,13.2 Z M0,7.3 H16.2 V8.4 H0 Z" fill="#e4e6e8"/></svg>
<div style="left:519px;top:763px;width:71px;height:16px;background:#29292c;border-radius:2px"></div>
<div class="t" style="left:519px;top:766.3px;font-size:10.6px;color:#84878b;width:71px;text-align:center;">Auto: Off</div>
<div style="left:512px;top:784.5px;width:85px;height:14.5px;background:#a6f28e;border-radius:0 0 5px 5px"></div>
<div class="t" style="left:512px;top:786px;font-size:11.6px;color:#111111;width:85px;text-align:center;">Spur 9</div>
<div style="left:599px;top:394px;width:85px;height:3px;background:#00ffff"></div>
<div style="left:599px;top:477px;width:85px;height:3px;background:#00ffff"></div>
<div style="left:599px;top:480px;width:85px;height:1px;background:#1a1b1e"></div>
<div style="left:599px;top:397px;width:85px;height:57px;background:#3b3e43"></div>
<div style="left:599px;top:397px;width:85px;height:21px;background:#3b3e43"></div>
<div style="left:599px;top:455px;width:85px;height:20px;background:#3b3e43"></div>
<svg width="12" height="12" viewBox="0 0 12 12" style="left:601.9px;top:400.9px"><path d="M3.3,2.6 A4.7,4.7 0 1 0 8.7,2.6" fill="none" stroke="#6a6d71" stroke-width="1.9"/><rect x="5.15" y="1.2" width="1.7" height="4.4" rx="0.5" fill="#6a6d71"/></svg>
<div class="t" style="left:616px;top:402px;font-size:11px;color:#c3c6cc;">Inserts</div>
<svg width="8" height="6" viewBox="0 0 8 6" style="left:659px;top:405px"><path d="M0,0 H8 L4,5.5 Z" fill="#7c7f84"/></svg>
<svg width="8" height="8" viewBox="0 0 8 8" style="left:672px;top:403.3px"><rect x="3.15" y="0" width="1.7" height="8" fill="#8d9095"/><rect x="0" y="3.15" width="8" height="1.7" fill="#8d9095"/></svg>
<svg width="12" height="12" viewBox="0 0 12 12" style="left:601.9px;top:458.0px"><path d="M3.3,2.6 A4.7,4.7 0 1 0 8.7,2.6" fill="none" stroke="#6a6d71" stroke-width="1.9"/><rect x="5.15" y="1.2" width="1.7" height="4.4" rx="0.5" fill="#6a6d71"/></svg>
<div class="t" style="left:616px;top:459px;font-size:11px;color:#c3c6cc;">Sends</div>
<svg width="8" height="6" viewBox="0 0 8 6" style="left:659px;top:462px"><path d="M0,0 H8 L4,5.5 Z" fill="#7c7f84"/></svg>
<svg width="8" height="8" viewBox="0 0 8 8" style="left:672px;top:460.3px"><rect x="3.15" y="0" width="1.7" height="8" fill="#8d9095"/><rect x="0" y="3.15" width="8" height="1.7" fill="#8d9095"/></svg>
<div style="left:599px;top:481px;width:85px;height:303px;background:#3b3e43"></div>
<div style="left:603px;top:485.2px;width:77px;height:15.8px;background:#303236;border:1px solid #232529;border-radius:3px"></div>
<div class="t" style="left:603px;top:487.9px;font-size:11.5px;color:#dfe3e8;width:77px;text-align:center;">leer</div>
<div style="left:603px;top:505.2px;width:77px;height:15.8px;background:#303236;border:1px solid #232529;border-radius:3px"></div>
<div class="t" style="left:603px;top:507.9px;font-size:11.5px;color:#dfe3e8;width:77px;text-align:center;">leer</div>
<div style="left:607.1px;top:564px;width:68.8px;height:41.6px;background:#1d1e21;border-radius:3px"></div>
<div style="left:608.1px;top:565px;width:33px;height:19px;background:#3c3f44;border-top:1px solid #4a4d52;border-radius:2px 0 0 0"></div>
<div style="left:642.1px;top:565px;width:32.8px;height:19px;background:#3c3f44;border-top:1px solid #4a4d52;border-radius:0 2px 0 0"></div>
<div class="t" style="left:608.1px;top:569px;font-size:12px;color:#e3e6ea;width:32.5px;text-align:center;">M</div>
<div class="t" style="left:642.1px;top:569px;font-size:12px;color:#e3e6ea;width:32.8px;text-align:center;">S</div>
<div style="left:608.1px;top:585.2px;width:33px;height:19.4px;background:#3c3f44;border-top:1px solid #4a4d52"></div>
<div style="left:642.1px;top:585.2px;width:32.8px;height:19.4px;background:#3c3f44;border-top:1px solid #4a4d52"></div>
<svg width="12" height="12" style="left:617.6px;top:589.2px"><circle cx="6" cy="6" r="4.7" fill="#c3c4c6"/></svg>
<svg width="12" height="12" style="left:651.6px;top:589.2px"><path d="M6,1.3 A4.7,4.7 0 0 0 6,10.7 Z" fill="#c3c4c6"/><path d="M6.8,1.5 A4.5,4.5 0 0 1 6.8,10.5" fill="none" stroke="#c3c4c6" stroke-width="1.1"/></svg>
<div class="t" style="left:599px;top:616px;font-size:11.5px;color:#e6e9ee;width:79px;text-align:center;">0dB</div>
<svg width="12" height="13" style="left:659.5px;top:633px"><rect x="0" y="0" width="12" height="13" rx="1.2" fill="#38393b"/><rect x="0.8" y="0.8" width="10.4" height="3.2" fill="#535556"/><rect x="0.8" y="4.9" width="10.4" height="3.2" fill="#535556"/><rect x="0.8" y="9" width="10.4" height="3.2" fill="#535556"/></svg>
<div style="left:615px;top:634px;width:15px;height:103.5px;background:#242529;border-radius:3px"></div>
<div style="left:618px;top:648px;width:9px;height:1px;background:#235d84"></div>
<div style="left:618px;top:656px;width:9px;height:1px;background:#235d84"></div>
<div style="left:618px;top:668px;width:9px;height:1px;background:#c9cbcd"></div>
<div style="left:618px;top:680px;width:9px;height:1px;background:#235d84"></div>
<div style="left:618px;top:690px;width:9px;height:1px;background:#235d84"></div>
<div style="left:618px;top:702px;width:9px;height:1px;background:#235d84"></div>
<div style="left:618px;top:715px;width:9px;height:1px;background:#235d84"></div>
<div style="left:618px;top:723px;width:9px;height:1px;background:#235d84"></div>
<div style="left:618px;top:729px;width:9px;height:1px;background:#235d84"></div>
<div class="t" style="left:578px;top:645.6px;font-size:8px;color:#d9dbdd;letter-spacing:-0.2px;width:35px;text-align:right;">10</div>
<div class="t" style="left:578px;top:652.8000000000001px;font-size:8px;color:#d9dbdd;letter-spacing:-0.2px;width:35px;text-align:right;">6</div>
<div class="t" style="left:578px;top:664.4px;font-size:8px;color:#d9dbdd;letter-spacing:-0.2px;width:35px;text-align:right;">0</div>
<div class="t" style="left:578px;top:676.5px;font-size:8px;color:#d9dbdd;letter-spacing:-0.2px;width:35px;text-align:right;">-6</div>
<div class="t" style="left:578px;top:686.5px;font-size:8px;color:#d9dbdd;letter-spacing:-0.2px;width:35px;text-align:right;">-12</div>
<div class="t" style="left:578px;top:699.4px;font-size:8px;color:#d9dbdd;letter-spacing:-0.2px;width:35px;text-align:right;">-24</div>
<div class="t" style="left:578px;top:711.4px;font-size:8px;color:#d9dbdd;letter-spacing:-0.2px;width:35px;text-align:right;">-36</div>
<div class="t" style="left:578px;top:719.1px;font-size:8px;color:#d9dbdd;letter-spacing:-0.2px;width:35px;text-align:right;">-48</div>
<div style="left:635px;top:686px;width:14px;height:51px;background:#54575d;border-radius:0 0 3px 3px"></div>
<div style="left:635px;top:694px;width:14px;height:1px;background:#6b6e74"></div>
<div style="left:635px;top:704px;width:14px;height:1px;background:#6b6e74"></div>
<div style="left:635px;top:710px;width:14px;height:1px;background:#6b6e74"></div>
<div style="left:641.2px;top:650px;width:2px;height:71px;background:#17181a"></div>
<div style="left:632.6px;top:649.8px;width:19px;height:36.6px;border-radius:3px;background:#262626;box-shadow:0 1px 1.5px rgba(0,0,0,.45);overflow:hidden"><div style="left:1px;top:1px;width:17px;height:34.6px;border-radius:2px;background:linear-gradient(#f6f6f6 0,#f0f0f0 3px,#7e7e7e 3.6px,#9c9c9c 4.4px,#b8b8b8 6px,#e0e0e0 9px,#ffffff 11.5px,#ffffff 17.3px,#4a4a4a 17.4px,#4a4a4a 18.3px,#ffffff 18.4px,#ffffff 26px,#d8d8d8 28.5px,#8a8a8a 30px,#ececec 30.9px,#f6f6f6 34.6px)"></div><div style="left:1px;top:1px;width:17px;height:34.6px;border-radius:2px;background:linear-gradient(90deg,rgba(80,80,80,.5) 0,rgba(255,255,255,0) 3px,rgba(255,255,255,0) 14px,rgba(80,80,80,.5) 17px)"></div></div>
<svg width="20" height="20" style="left:656.6px;top:717.6px"><circle cx="10" cy="10" r="8.45" fill="#8f9398"/><rect x="4.6" y="6.4" width="4.7" height="6.9" rx="0.6" fill="#3b3e43"/><rect x="10.5" y="6.4" width="1.7" height="6.9" fill="#3b3e43"/><rect x="13.6" y="6.4" width="1.7" height="6.9" fill="#3b3e43"/></svg>
<div class="t" style="left:615px;top:746.6px;font-size:11.5px;color:#eef0f3;">10</div>
<svg width="17" height="15" style="left:659px;top:744px"><path d="M3.1,8.0 L5.2,2.3 L7.0,8.0 Z M9.3,8.0 L11.2,0.6 L13.1,8.0 Z M0.0,7.5 L3.4,7.5 L1.7,13.2 Z M6.5,7.5 L9.7,7.5 L8.1,14.0 Z M12.7,7.5 L16.1,7.5 L14.2,13.2 Z M0,7.3 H16.2 V8.4 H0 Z" fill="#e4e6e8"/></svg>
<div style="left:606px;top:763px;width:71px;height:16px;background:#29292c;border-radius:2px"></div>
<div class="t" style="left:606px;top:766.3px;font-size:10.6px;color:#84878b;width:71px;text-align:center;">Auto: Off</div>
<div style="left:599px;top:784.5px;width:85px;height:14.5px;background:#00ffff;border-radius:0 0 5px 5px"></div>
<div class="t" style="left:599px;top:786px;font-size:11.6px;color:#111111;width:85px;text-align:center;">Spur 4</div>
<svg width="6" height="8" style="left:0;top:802px"><path d="M0,4 L4,1 L4,8 L0,8 Z" fill="#55575b"/></svg>
<div style="left:81px;top:11px;width:271px;height:474px;background:#2c2d2f;border:1px solid #3b3d40;box-shadow:2.5px 6px 2.5px rgba(0,0,0,.5)"></div>
<div class="t" style="left:121px;top:18.6px;font-size:12px;color:#c9ccd0;">Keiner</div>
<svg width="14" height="14" viewBox="0 0 14 14" style="left:101px;top:39px"><rect x="0" y="0" width="14" height="14" fill="#07a307"/><path d="M1,5.3 H4.2 V3 L7.9,6.4 L4.2,9.8 V7.6 H1 Z" fill="#b8f0b8"/><path d="M10.3,3.1 H12 V9.9 H10.3 Q9.3,9.9 9.3,8.9 V4.1 Q9.3,3.1 10.3,3.1 Z" fill="#b8f0b8"/></svg>
<div class="t" style="left:121px;top:40.2px;font-size:12px;color:#c9ccd0;letter-spacing:0.1px;">BD</div>
<svg width="10" height="6" style="left:140.9px;top:43px"><path d="M0,2 H7 V3 H0 Z M6.3,0.6 L9.6,2.5 L6.3,4.4 Z" fill="#dcdfe3"/></svg>
<div class="t" style="left:153.47187499999998px;top:40.2px;font-size:12px;color:#c9ccd0;">In 1</div>
<svg width="14" height="14" viewBox="0 0 14 14" style="left:101px;top:61px"><rect x="0" y="0" width="14" height="14" fill="#07a307"/><path d="M1,5.3 H4.2 V3 L7.9,6.4 L4.2,9.8 V7.6 H1 Z" fill="#b8f0b8"/><path d="M10.3,3.1 H12 V9.9 H10.3 Q9.3,9.9 9.3,8.9 V4.1 Q9.3,3.1 10.3,3.1 Z" fill="#b8f0b8"/></svg>
<div class="t" style="left:121px;top:62.2px;font-size:12px;color:#c9ccd0;letter-spacing:0.1px;">MS</div>
<svg width="10" height="6" style="left:142.2px;top:65px"><path d="M0,2 H7 V3 H0 Z M6.3,0.6 L9.6,2.5 L6.3,4.4 Z" fill="#dcdfe3"/></svg>
<div class="t" style="left:154.79999999999998px;top:62.2px;font-size:12px;color:#c9ccd0;">In 2</div>
<svg width="14" height="14" viewBox="0 0 14 14" style="left:101px;top:83px"><rect x="0" y="0" width="14" height="14" fill="#07a307"/><path d="M1,5.3 H4.2 V3 L7.9,6.4 L4.2,9.8 V7.6 H1 Z" fill="#b8f0b8"/><path d="M10.3,3.1 H12 V9.9 H10.3 Q9.3,9.9 9.3,8.9 V4.1 Q9.3,3.1 10.3,3.1 Z" fill="#b8f0b8"/></svg>
<div class="t" style="left:121px;top:84.2px;font-size:12px;color:#c9ccd0;letter-spacing:0.1px;">SS</div>
<svg width="10" height="6" style="left:140.2px;top:87px"><path d="M0,2 H7 V3 H0 Z M6.3,0.6 L9.6,2.5 L6.3,4.4 Z" fill="#dcdfe3"/></svg>
<div class="t" style="left:152.79999999999998px;top:84.2px;font-size:12px;color:#c9ccd0;">In 3</div>
<svg width="14" height="14" viewBox="0 0 14 14" style="left:101px;top:105px"><rect x="0" y="0" width="14" height="14" fill="#07a307"/><path d="M1,5.3 H4.2 V3 L7.9,6.4 L4.2,9.8 V7.6 H1 Z" fill="#b8f0b8"/><path d="M10.3,3.1 H12 V9.9 H10.3 Q9.3,9.9 9.3,8.9 V4.1 Q9.3,3.1 10.3,3.1 Z" fill="#b8f0b8"/></svg>
<div class="t" style="left:121px;top:106.2px;font-size:12px;color:#c9ccd0;letter-spacing:0.1px;">OH-L</div>
<svg width="10" height="6" style="left:153.1px;top:109px"><path d="M0,2 H7 V3 H0 Z M6.3,0.6 L9.6,2.5 L6.3,4.4 Z" fill="#dcdfe3"/></svg>
<div class="t" style="left:165.671875px;top:106.2px;font-size:12px;color:#c9ccd0;">In 4</div>
<svg width="14" height="14" viewBox="0 0 14 14" style="left:101px;top:127px"><rect x="0" y="0" width="14" height="14" fill="#07a307"/><path d="M1,5.3 H4.2 V3 L7.9,6.4 L4.2,9.8 V7.6 H1 Z" fill="#b8f0b8"/><path d="M10.3,3.1 H12 V9.9 H10.3 Q9.3,9.9 9.3,8.9 V4.1 Q9.3,3.1 10.3,3.1 Z" fill="#b8f0b8"/></svg>
<div class="t" style="left:121px;top:128.2px;font-size:12px;color:#c9ccd0;letter-spacing:0.1px;">OH-R</div>
<svg width="10" height="6" style="left:155.1px;top:131px"><path d="M0,2 H7 V3 H0 Z M6.3,0.6 L9.6,2.5 L6.3,4.4 Z" fill="#dcdfe3"/></svg>
<div class="t" style="left:167.671875px;top:128.2px;font-size:12px;color:#c9ccd0;">In 5</div>
<svg width="14" height="14" viewBox="0 0 14 14" style="left:101px;top:149px"><rect x="0" y="0" width="14" height="14" fill="#ff1010"/><path d="M1,5.3 H4.2 V3 L7.9,6.4 L4.2,9.8 V7.6 H1 Z" fill="#ffb8b8"/><path d="M10.3,3.1 H12 V9.9 H10.3 Q9.3,9.9 9.3,8.9 V4.1 Q9.3,3.1 10.3,3.1 Z" fill="#ffb8b8"/></svg>
<div class="t" style="left:121px;top:150.2px;font-size:12px;color:#c9ccd0;letter-spacing:0.1px;">Bass</div>
<svg width="10" height="6" style="left:151.1px;top:153px"><path d="M0,2 H7 V3 H0 Z M6.3,0.6 L9.6,2.5 L6.3,4.4 Z" fill="#dcdfe3"/></svg>
<div class="t" style="left:163.671875px;top:150.2px;font-size:12px;color:#c9ccd0;">In 6</div>
<svg width="14" height="14" viewBox="0 0 14 14" style="left:101px;top:171px"><rect x="0" y="0" width="14" height="14" fill="#1262e0"/><path d="M1,5.3 H4.2 V3 L7.9,6.4 L4.2,9.8 V7.6 H1 Z" fill="#b0ccf4"/><path d="M10.3,3.1 H12 V9.9 H10.3 Q9.3,9.9 9.3,8.9 V4.1 Q9.3,3.1 10.3,3.1 Z" fill="#b0ccf4"/></svg>
<div class="t" style="left:121px;top:172.2px;font-size:12px;color:#c9ccd0;letter-spacing:0.1px;">Git. Dirk</div>
<svg width="10" height="6" style="left:168.2px;top:175px"><path d="M0,2 H7 V3 H0 Z M6.3,0.6 L9.6,2.5 L6.3,4.4 Z" fill="#dcdfe3"/></svg>
<div class="t" style="left:180.828125px;top:172.2px;font-size:12px;color:#c9ccd0;">In 7</div>
<svg width="14" height="14" viewBox="0 0 14 14" style="left:101px;top:193px"><rect x="0" y="0" width="14" height="14" fill="#e6ff00"/><path d="M1,5.3 H4.2 V3 L7.9,6.4 L4.2,9.8 V7.6 H1 Z" fill="#f6ffb8"/><path d="M10.3,3.1 H12 V9.9 H10.3 Q9.3,9.9 9.3,8.9 V4.1 Q9.3,3.1 10.3,3.1 Z" fill="#f6ffb8"/></svg>
<div class="t" style="left:121px;top:194.2px;font-size:12px;color:#c9ccd0;letter-spacing:0.1px;">Git. Ralf</div>
<svg width="10" height="6" style="left:168.2px;top:197px"><path d="M0,2 H7 V3 H0 Z M6.3,0.6 L9.6,2.5 L6.3,4.4 Z" fill="#dcdfe3"/></svg>
<div class="t" style="left:180.828125px;top:194.2px;font-size:12px;color:#c9ccd0;">In 8</div>
<svg width="14" height="14" viewBox="0 0 14 14" style="left:101px;top:215px"><path d="M1,5.3 H4.2 V3 L7.9,6.4 L4.2,9.8 V7.6 H1 Z" fill="#d2d2d2"/><path d="M10.3,3.1 H12 V9.9 H10.3 Q9.3,9.9 9.3,8.9 V4.1 Q9.3,3.1 10.3,3.1 Z" fill="#d2d2d2"/></svg>
<div class="t" style="left:121px;top:216.2px;font-size:12px;color:#c9ccd0;letter-spacing:0.1px;">leer</div>
<svg width="10" height="6" style="left:144.4px;top:219px"><path d="M0,2 H7 V3 H0 Z M6.3,0.6 L9.6,2.5 L6.3,4.4 Z" fill="#dcdfe3"/></svg>
<div class="t" style="left:157.015625px;top:216.2px;font-size:12px;color:#c9ccd0;">In 9</div>
<svg width="14" height="14" viewBox="0 0 14 14" style="left:101px;top:237px"><path d="M1,5.3 H4.2 V3 L7.9,6.4 L4.2,9.8 V7.6 H1 Z" fill="#d2d2d2"/><path d="M10.3,3.1 H12 V9.9 H10.3 Q9.3,9.9 9.3,8.9 V4.1 Q9.3,3.1 10.3,3.1 Z" fill="#d2d2d2"/></svg>
<div class="t" style="left:121px;top:238.2px;font-size:12px;color:#c9ccd0;letter-spacing:0.1px;">leer</div>
<svg width="10" height="6" style="left:144.4px;top:241px"><path d="M0,2 H7 V3 H0 Z M6.3,0.6 L9.6,2.5 L6.3,4.4 Z" fill="#dcdfe3"/></svg>
<div class="t" style="left:157.015625px;top:238.2px;font-size:12px;color:#c9ccd0;">In 10</div>
<svg width="14" height="14" viewBox="0 0 14 14" style="left:101px;top:259px"><path d="M1,5.3 H4.2 V3 L7.9,6.4 L4.2,9.8 V7.6 H1 Z" fill="#d2d2d2"/><path d="M10.3,3.1 H12 V9.9 H10.3 Q9.3,9.9 9.3,8.9 V4.1 Q9.3,3.1 10.3,3.1 Z" fill="#d2d2d2"/></svg>
<div class="t" style="left:121px;top:260.2px;font-size:12px;color:#c9ccd0;letter-spacing:0.1px;">leer</div>
<svg width="10" height="6" style="left:144.4px;top:263px"><path d="M0,2 H7 V3 H0 Z M6.3,0.6 L9.6,2.5 L6.3,4.4 Z" fill="#dcdfe3"/></svg>
<div class="t" style="left:157.015625px;top:260.2px;font-size:12px;color:#c9ccd0;">In 11</div>
<svg width="14" height="14" viewBox="0 0 14 14" style="left:101px;top:281px"><rect x="0" y="0" width="14" height="14" fill="#ff1010"/><path d="M1,5.3 H4.2 V3 L7.9,6.4 L4.2,9.8 V7.6 H1 Z" fill="#ffb8b8"/><path d="M10.3,3.1 H12 V9.9 H10.3 Q9.3,9.9 9.3,8.9 V4.1 Q9.3,3.1 10.3,3.1 Z" fill="#ffb8b8"/></svg>
<div class="t" style="left:121px;top:282.2px;font-size:12px;color:#c9ccd0;letter-spacing:0.1px;">Vocals Tom</div>
<svg width="10" height="6" style="left:186.1px;top:285px"><path d="M0,2 H7 V3 H0 Z M6.3,0.6 L9.6,2.5 L6.3,4.4 Z" fill="#dcdfe3"/></svg>
<div class="t" style="left:198.740625px;top:282.2px;font-size:12px;color:#c9ccd0;">In 12</div>
<svg width="14" height="14" viewBox="0 0 14 14" style="left:101px;top:303px"><rect x="0" y="0" width="14" height="14" fill="#1262e0"/><path d="M1,5.3 H4.2 V3 L7.9,6.4 L4.2,9.8 V7.6 H1 Z" fill="#b0ccf4"/><path d="M10.3,3.1 H12 V9.9 H10.3 Q9.3,9.9 9.3,8.9 V4.1 Q9.3,3.1 10.3,3.1 Z" fill="#b0ccf4"/></svg>
<div class="t" style="left:121px;top:304.2px;font-size:12px;color:#c9ccd0;letter-spacing:0.1px;">Vocals Dirk</div>
<svg width="10" height="6" style="left:185.1px;top:307px"><path d="M0,2 H7 V3 H0 Z M6.3,0.6 L9.6,2.5 L6.3,4.4 Z" fill="#dcdfe3"/></svg>
<div class="t" style="left:197.73125px;top:304.2px;font-size:12px;color:#c9ccd0;">In 13</div>
<svg width="14" height="14" viewBox="0 0 14 14" style="left:101px;top:325px"><rect x="0" y="0" width="14" height="14" fill="#e6ff00"/><path d="M1,5.3 H4.2 V3 L7.9,6.4 L4.2,9.8 V7.6 H1 Z" fill="#f6ffb8"/><path d="M10.3,3.1 H12 V9.9 H10.3 Q9.3,9.9 9.3,8.9 V4.1 Q9.3,3.1 10.3,3.1 Z" fill="#f6ffb8"/></svg>
<div class="t" style="left:121px;top:326.2px;font-size:12px;color:#c9ccd0;letter-spacing:0.1px;">Vocals Ralf</div>
<svg width="10" height="6" style="left:185.1px;top:329px"><path d="M0,2 H7 V3 H0 Z M6.3,0.6 L9.6,2.5 L6.3,4.4 Z" fill="#dcdfe3"/></svg>
<div class="t" style="left:197.73125px;top:326.2px;font-size:12px;color:#c9ccd0;">In 14</div>
<svg width="14" height="14" viewBox="0 0 14 14" style="left:101px;top:347px"><rect x="0" y="0" width="14" height="14" fill="#07a307"/><path d="M1,5.3 H4.2 V3 L7.9,6.4 L4.2,9.8 V7.6 H1 Z" fill="#b8f0b8"/><path d="M10.3,3.1 H12 V9.9 H10.3 Q9.3,9.9 9.3,8.9 V4.1 Q9.3,3.1 10.3,3.1 Z" fill="#b8f0b8"/></svg>
<div class="t" style="left:121px;top:348.2px;font-size:12px;color:#c9ccd0;letter-spacing:0.1px;">TB Rainer</div>
<svg width="10" height="6" style="left:178.9px;top:351px"><path d="M0,2 H7 V3 H0 Z M6.3,0.6 L9.6,2.5 L6.3,4.4 Z" fill="#dcdfe3"/></svg>
<div class="t" style="left:191.515625px;top:348.2px;font-size:12px;color:#c9ccd0;">In 15</div>
<svg width="14" height="14" viewBox="0 0 14 14" style="left:101px;top:369px"><rect x="0" y="0" width="14" height="14" fill="#07a307"/><path d="M1,5.3 H4.2 V3 L7.9,6.4 L4.2,9.8 V7.6 H1 Z" fill="#b8f0b8"/><path d="M10.3,3.1 H12 V9.9 H10.3 Q9.3,9.9 9.3,8.9 V4.1 Q9.3,3.1 10.3,3.1 Z" fill="#b8f0b8"/></svg>
<div class="t" style="left:121px;top:370.2px;font-size:12px;color:#c9ccd0;letter-spacing:0.1px;">Klick</div>
<svg width="10" height="6" style="left:149.8px;top:373px"><path d="M0,2 H7 V3 H0 Z M6.3,0.6 L9.6,2.5 L6.3,4.4 Z" fill="#dcdfe3"/></svg>
<div class="t" style="left:162.44375px;top:370.2px;font-size:12px;color:#c9ccd0;">In 16</div>
<div style="left:83px;top:388px;width:267px;height:21px;background:#2d6bb6"></div>
<svg width="6" height="9" style="left:91px;top:394px"><path d="M0.5,0.5 L4.8,4.2 L0.5,8 Z" fill="#d0d4da"/></svg>
<svg width="12" height="10" style="left:102px;top:392.5px"><path d="M1,5 L4.3,8.3 L11,1.3" fill="none" stroke="#ffffff" stroke-width="1.8"/></svg>
<div class="t" style="left:121px;top:392.8px;font-size:12.2px;color:#ffffff;">Ausgänge</div>
<svg width="6" height="9" style="left:91px;top:416px"><path d="M0.5,0.5 L4.8,4.2 L0.5,8 Z" fill="#a9adb3"/></svg>
<div class="t" style="left:121px;top:414.5px;font-size:12.2px;color:#c9ccd0;">Spuren</div>
<div style="left:120px;top:435px;width:230px;height:1px;background:#47494d"></div>
<div class="t" style="left:121px;top:444.3px;font-size:12.25px;color:#c9ccd0;">In aufsteigender Reihenfolge zuweisen</div>
<div class="t" style="left:121px;top:466.3px;font-size:12.2px;color:#c9ccd0;">Audio I/O</div>
<svg width="710" height="809" style="left:0;top:0"><path d="M113.0,10.0 C115.0,9.9 121.2,9.1 125.0,9.3 C128.8,9.5 132.2,10.1 135.5,11.0 C138.8,11.9 141.6,13.6 145.0,14.8 C148.4,16.1 151.4,16.8 155.8,18.5 C160.2,20.2 166.4,22.6 171.7,24.8 C177.0,27.0 182.9,29.7 187.5,31.7 C192.1,33.7 196.2,34.7 199.0,36.8 C201.8,38.9 203.4,41.7 204.4,44.4 C205.4,47.1 205.3,50.0 205.0,52.8 C204.7,55.6 204.0,58.8 202.3,61.3 C200.6,63.8 198.3,65.8 195.0,67.6 C191.7,69.3 187.1,70.8 182.3,71.8 C177.5,72.8 171.7,73.5 166.4,73.9 C161.1,74.3 155.0,74.4 150.6,74.3 C146.2,74.2 144.3,74.3 140.0,73.4 C135.7,72.5 130.0,70.4 125.0,68.7 C120.0,67.0 114.8,65.2 110.0,63.4 C105.2,61.5 100.4,59.5 96.4,57.6 C92.4,55.7 88.4,53.6 85.8,51.8 C83.2,49.9 81.6,48.3 80.6,46.5 C79.5,44.7 79.0,43.0 79.5,41.2 C80.0,39.4 81.4,37.6 83.7,35.9 C86.0,34.2 89.7,32.7 93.2,31.2 C96.8,29.7 101.0,28.0 105.0,27.0 C109.0,26.0 112.8,25.7 117.5,25.4 C122.2,25.1 128.8,25.2 133.4,25.4 C138.0,25.6 141.2,25.4 145.0,26.4 C148.8,27.4 154.5,30.4 156.4,31.2" fill="none" stroke="#e51b1b" stroke-width="3.9" stroke-linecap="round" stroke-linejoin="round"/><path d="M127.5,478.8 C127.0,478.8 126.2,479.1 124.5,479.0 C122.8,478.9 120.1,478.6 117.5,478.4 C114.9,478.2 111.3,477.9 109.0,478.0 C106.7,478.1 104.9,478.3 103.5,479.0 C102.1,479.7 101.0,480.7 100.4,482.0 C99.8,483.3 100.0,485.2 100.1,486.6 C100.2,488.0 100.4,489.3 101.2,490.6 C102.0,491.9 103.3,493.3 105.1,494.6 C106.9,495.9 109.6,497.5 111.9,498.6 C114.2,499.7 116.5,500.8 118.7,501.3 C121.0,501.9 123.6,502.3 125.4,501.9 C127.2,501.5 128.7,500.4 129.4,499.0 C130.2,497.6 130.0,495.5 129.9,493.4 C129.8,491.2 129.2,488.1 128.8,486.1 C128.4,484.1 127.8,482.8 127.3,481.6 C126.8,480.4 126.0,479.7 126.0,479.0 C126.0,478.3 127.3,477.8 127.6,477.6" fill="none" stroke="#e51b1b" stroke-width="3.9" stroke-linecap="round" stroke-linejoin="round"/></svg>
</body></html>
